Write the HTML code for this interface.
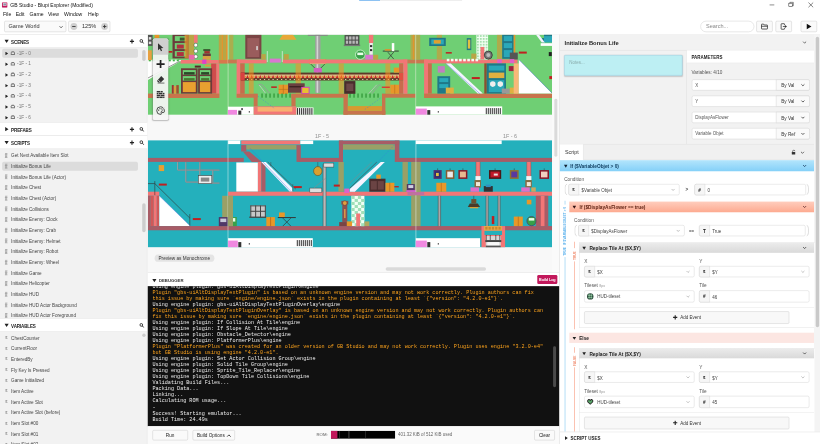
<!DOCTYPE html><html><head><meta charset="utf-8"><title>GB Studio - Blupi Explorer (Modified)</title><style>
html,body{margin:0;padding:0;background:#fff;overflow:hidden}
body{width:820px;height:444px;position:relative}
#app{position:absolute;left:0;top:0;width:1920px;height:1040px;transform:scale(0.4270833);transform-origin:0 0;font-family:"Liberation Sans",sans-serif;overflow:hidden;filter:opacity(1)}
.ab{position:absolute;box-sizing:border-box}
.t{white-space:nowrap;line-height:1.2}
.b{font-weight:bold}
.c{text-align:center}
.btn{border:1px solid #c4c4c4;border-radius:3px;background:#fafafa}
.log{font-family:"Liberation Mono",monospace;font-size:12px;line-height:14.160px;font-weight:normal}
.log div{white-space:pre;height:14.160px}
.log .w{color:#f0f0f0}
.log .o{color:#ffa41c}
.inp{border:1px solid #d0d0d0;border-radius:4px;background:#fff}
.lab{font-size:11px;color:#555;margin-top:1.500px}

</style></head><body><div id="app">
<div class="ab" style="left:0;top:0;width:1920px;height:43px;background:#fff"></div>
<svg class="ab" style="left:4px;top:5px" width="14" height="13" viewBox="0 0 15 15"><rect x="0" y="0" width="15" height="15" rx="2" fill="#c2185b"/><rect x="2.5" y="2" width="10" height="8" fill="#e8d8e0"/><rect x="4" y="3.5" width="7" height="5" fill="#8a97a8"/></svg>
<div class="ab t" style="left:24px;top:5.500px;font-size:11.800px;color:#111">GB Studio - Blupi Explorer (Modified)</div>
<div class="ab" style="left:841px;top:0;width:49px;height:2px;background:#7ab8f0"></div><div class="ab" style="left:890px;top:0;width:192px;height:2px;background:#ececec"></div>
<svg class="ab" style="left:1790px;top:0" width="130" height="23" viewBox="0 0 130 23"><path d="M12 11.5h11" stroke="#222" stroke-width="1.2"/><rect x="57" y="7.5" width="8" height="8" fill="#fff" stroke="#222" stroke-width="1.2"/><path d="M59.5 7.5v-2h8v8h-2.5" fill="none" stroke="#222" stroke-width="1.2"/><path d="M103 6l11 11M114 6l-11 11" stroke="#222" stroke-width="1.3"/></svg>
<div class="ab t" style="left:7px;top:27px;font-size:12px;color:#111">File</div>
<div class="ab t" style="left:36.7px;top:27px;font-size:12px;color:#111">Edit</div>
<div class="ab t" style="left:69.2px;top:27px;font-size:12px;color:#111">Game</div>
<div class="ab t" style="left:112.4px;top:27px;font-size:12px;color:#111">View</div>
<div class="ab t" style="left:150px;top:27px;font-size:12px;color:#111">Window</div>
<div class="ab t" style="left:206.3px;top:27px;font-size:12px;color:#111">Help</div>
<div class="ab" style="left:0;top:43px;width:1920px;height:38px;background:#fff;border-bottom:1px solid #dedede;box-sizing:border-box"></div>
<div class="ab btn" style="left:10px;top:49px;width:145px;height:26px"></div>
<div class="ab t" style="left:20px;top:54px;font-size:13px;color:#333">Game World</div>
<svg class="ab" style="left:137px;top:57px" width="12" height="12" viewBox="0 0 12 12"><path d="M2.5 4.5L6 8l3.5-3.5" fill="none" stroke="#333" stroke-width="1.8"/></svg>
<div class="ab btn" style="left:160px;top:49px;width:98px;height:26px"></div>
<div class="ab" style="left:165px;top:54px;width:16px;height:16px;border-radius:8px;background:#cfcfcf"></div><div class="ab" style="left:169px;top:61px;width:8px;height:2px;background:#333"></div>
<div class="ab t" style="left:192px;top:54px;font-size:13px;color:#333">125%</div>
<div class="ab" style="left:237px;top:54px;width:16px;height:16px;border-radius:8px;background:#cfcfcf"></div><div class="ab" style="left:241px;top:61px;width:8px;height:2px;background:#333"></div><div class="ab" style="left:244px;top:58px;width:2px;height:8px;background:#333"></div>
<div class="ab" style="left:1640px;top:49px;width:126px;height:26px;border:1px solid #c8c8c8;border-radius:13px;box-sizing:border-box;background:#fff"></div>
<div class="ab t" style="left:1653px;top:54px;font-size:13px;color:#888">Search...</div>
<div class="ab btn" style="left:1771px;top:49px;width:38px;height:26px"></div>
<svg class="ab" style="left:1781px;top:53px" width="18" height="18" viewBox="0 0 18 18"><path d="M2 4.5a1 1 0 0 1 1-1h4l1.5 2H15a1 1 0 0 1 1 1V14a1 1 0 0 1-1 1H3a1 1 0 0 1-1-1z" fill="none" stroke="#222" stroke-width="1.7"/><path d="M2 8.5h14" stroke="#222" stroke-width="1.7"/></svg>
<div class="ab btn" style="left:1816px;top:49px;width:38px;height:26px"></div>
<svg class="ab" style="left:1826px;top:53px" width="18" height="18" viewBox="0 0 18 18"><path d="M11 6V3.5a1 1 0 0 0-1-1H4a1 1 0 0 0-1 1v11a1 1 0 0 0 1 1h6a1 1 0 0 0 1-1V12" fill="none" stroke="#222" stroke-width="1.7"/><path d="M7 9h7" stroke="#222" stroke-width="1.7"/><path d="M12.5 5.5L16.5 9l-4 3.5z" fill="#222"/></svg>
<div class="ab btn" style="left:1875px;top:49px;width:38px;height:26px"></div>
<svg class="ab" style="left:1886px;top:54px" width="16" height="16" viewBox="0 0 16 16"><path d="M3 1.5v13l11-6.5z" fill="#111"/></svg>
<div class="ab" style="left:0;top:81px;width:345px;height:959px;background:#f2f2f2;border-right:1px solid #d4d4d4"></div>
<div class="ab" style="left:0;top:81px;width:345px;height:30px;background:#fff;border-bottom:1px solid #dcdcdc;border-top:1px solid #dcdcdc;box-sizing:content-box;margin-top:-1px"></div>
<svg class="ab" style="left:10px;top:91px" width="11" height="11" viewBox="0 0 10 10"><path d="M0.500 2h9L5 9z" fill="#222"/></svg>
<div class="ab t b" style="left:26px;top:91.5px;font-size:10.600px;letter-spacing:-0.3px;color:#222">SCENES</div>
<svg class="ab" style="left:302.5px;top:90.5px" width="12" height="12" viewBox="0 0 12 12"><path d="M6 1v10M1 6h10" stroke="#222" stroke-width="2.6"/></svg>
<svg class="ab" style="left:326px;top:90.5px" width="12" height="12" viewBox="0 0 12 12"><circle cx="4.8" cy="4.8" r="3.2" fill="none" stroke="#222" stroke-width="2"/><path d="M7.2 7.2L11 11" stroke="#222" stroke-width="2.2"/></svg>
<div class="ab" style="left:5px;top:114px;width:318px;height:21px;border-radius:4px;background:#dcdcdc"></div>
<svg class="ab" style="left:10.500px;top:120.5px" width="9" height="9" viewBox="0 0 10 10"><path d="M2 0.500v9l7-4.500z" fill="#222"/></svg>
<svg class="ab" style="left:24px;top:118px" width="12" height="12" viewBox="0 0 12 12"><path d="M1 10.5V5.5L3.5 2h5L11 5.5v5z" fill="#777"/><rect x="3.3" y="5" width="5.4" height="3.2" fill="#f2f2f2"/></svg>
<div class="ab t" style="left:40px;top:118px;font-size:11px;color:#777">-1F - 0</div>
<svg class="ab" style="left:10.500px;top:145.5px" width="9" height="9" viewBox="0 0 10 10"><path d="M2 0.500v9l7-4.500z" fill="#222"/></svg>
<svg class="ab" style="left:24px;top:143px" width="12" height="12" viewBox="0 0 12 12"><path d="M1 10.5V5.5L3.5 2h5L11 5.5v5z" fill="#777"/><rect x="3.3" y="5" width="5.4" height="3.2" fill="#f2f2f2"/></svg>
<div class="ab t" style="left:40px;top:143px;font-size:11px;color:#777">-1F - 1</div>
<svg class="ab" style="left:10.500px;top:170.5px" width="9" height="9" viewBox="0 0 10 10"><path d="M2 0.500v9l7-4.500z" fill="#222"/></svg>
<svg class="ab" style="left:24px;top:168px" width="12" height="12" viewBox="0 0 12 12"><path d="M1 10.5V5.5L3.5 2h5L11 5.5v5z" fill="#777"/><rect x="3.3" y="5" width="5.4" height="3.2" fill="#f2f2f2"/></svg>
<div class="ab t" style="left:40px;top:168px;font-size:11px;color:#777">-1F - 2</div>
<svg class="ab" style="left:10.500px;top:195.5px" width="9" height="9" viewBox="0 0 10 10"><path d="M2 0.500v9l7-4.500z" fill="#222"/></svg>
<svg class="ab" style="left:24px;top:193px" width="12" height="12" viewBox="0 0 12 12"><path d="M1 10.5V5.5L3.5 2h5L11 5.5v5z" fill="#777"/><rect x="3.3" y="5" width="5.4" height="3.2" fill="#f2f2f2"/></svg>
<div class="ab t" style="left:40px;top:193px;font-size:11px;color:#777">-1F - 3</div>
<svg class="ab" style="left:10.500px;top:220.5px" width="9" height="9" viewBox="0 0 10 10"><path d="M2 0.500v9l7-4.500z" fill="#222"/></svg>
<svg class="ab" style="left:24px;top:218px" width="12" height="12" viewBox="0 0 12 12"><path d="M1 10.5V5.5L3.5 2h5L11 5.5v5z" fill="#777"/><rect x="3.3" y="5" width="5.4" height="3.2" fill="#f2f2f2"/></svg>
<div class="ab t" style="left:40px;top:218px;font-size:11px;color:#777">-1F - 4</div>
<svg class="ab" style="left:10.500px;top:245.5px" width="9" height="9" viewBox="0 0 10 10"><path d="M2 0.500v9l7-4.500z" fill="#222"/></svg>
<svg class="ab" style="left:24px;top:243px" width="12" height="12" viewBox="0 0 12 12"><path d="M1 10.5V5.5L3.5 2h5L11 5.5v5z" fill="#777"/><rect x="3.3" y="5" width="5.4" height="3.2" fill="#f2f2f2"/></svg>
<div class="ab t" style="left:40px;top:243px;font-size:11px;color:#777">-1F - 5</div>
<svg class="ab" style="left:10.500px;top:270.5px" width="9" height="9" viewBox="0 0 10 10"><path d="M2 0.500v9l7-4.500z" fill="#222"/></svg>
<svg class="ab" style="left:24px;top:268px" width="12" height="12" viewBox="0 0 12 12"><path d="M1 10.5V5.5L3.5 2h5L11 5.5v5z" fill="#777"/><rect x="3.3" y="5" width="5.4" height="3.2" fill="#f2f2f2"/></svg>
<div class="ab t" style="left:40px;top:268px;font-size:11px;color:#777">-1F - 6</div>
<div class="ab" style="left:333px;top:117px;width:8px;height:26px;border-radius:4px;background:#cdcdcd"></div>
<div class="ab" style="left:0;top:287px;width:345px;height:30px;background:#fff;border-bottom:1px solid #dcdcdc;border-top:1px solid #dcdcdc;box-sizing:content-box;margin-top:-1px"></div>
<svg class="ab" style="left:10px;top:297px" width="11" height="11" viewBox="0 0 10 10"><path d="M2 0.500v9l7-4.500z" fill="#222"/></svg>
<div class="ab t b" style="left:26px;top:297.5px;font-size:10.600px;letter-spacing:-0.3px;color:#222">PREFABS</div>
<svg class="ab" style="left:302.5px;top:296.5px" width="12" height="12" viewBox="0 0 12 12"><path d="M6 1v10M1 6h10" stroke="#222" stroke-width="2.6"/></svg>
<svg class="ab" style="left:326px;top:296.5px" width="12" height="12" viewBox="0 0 12 12"><circle cx="4.8" cy="4.8" r="3.2" fill="none" stroke="#222" stroke-width="2"/><path d="M7.2 7.2L11 11" stroke="#222" stroke-width="2.2"/></svg>
<div class="ab" style="left:0;top:318px;width:345px;height:30px;background:#fff;border-bottom:1px solid #dcdcdc;border-top:1px solid #dcdcdc;box-sizing:content-box;margin-top:-1px"></div>
<svg class="ab" style="left:10px;top:328px" width="11" height="11" viewBox="0 0 10 10"><path d="M0.500 2h9L5 9z" fill="#222"/></svg>
<div class="ab t b" style="left:26px;top:328.5px;font-size:10.600px;letter-spacing:-0.3px;color:#222">SCRIPTS</div>
<svg class="ab" style="left:302.5px;top:327.5px" width="12" height="12" viewBox="0 0 12 12"><path d="M6 1v10M1 6h10" stroke="#222" stroke-width="2.6"/></svg>
<svg class="ab" style="left:326px;top:327.5px" width="12" height="12" viewBox="0 0 12 12"><circle cx="4.8" cy="4.8" r="3.2" fill="none" stroke="#222" stroke-width="2"/><path d="M7.2 7.2L11 11" stroke="#222" stroke-width="2.2"/></svg>
<svg class="ab" style="left:9px;top:357.5px" width="11" height="12" viewBox="0 0 11 12"><path d="M3 1h5.5M5 1v10M2.5 4.5h6M3 8h5M2.5 11h6" stroke="#888" stroke-width="1.400" fill="none"/></svg>
<div class="ab t" style="left:26px;top:358.0px;font-size:10.800px;color:#444">Get Next Available Item Slot</div>
<div class="ab" style="left:5px;top:378.5px;width:318px;height:21px;border-radius:4px;background:#dcdcdc"></div>
<svg class="ab" style="left:9px;top:382.5px" width="11" height="12" viewBox="0 0 11 12"><path d="M3 1h5.5M5 1v10M2.5 4.5h6M3 8h5M2.5 11h6" stroke="#888" stroke-width="1.400" fill="none"/></svg>
<div class="ab t" style="left:26px;top:383.0px;font-size:10.800px;color:#444">Initialize Bonus Life</div>
<svg class="ab" style="left:9px;top:407.5px" width="11" height="12" viewBox="0 0 11 12"><path d="M3 1h5.5M5 1v10M2.5 4.5h6M3 8h5M2.5 11h6" stroke="#888" stroke-width="1.400" fill="none"/></svg>
<div class="ab t" style="left:26px;top:408.0px;font-size:10.800px;color:#444">Initialize Bonus Life (Actor)</div>
<svg class="ab" style="left:9px;top:432.5px" width="11" height="12" viewBox="0 0 11 12"><path d="M3 1h5.5M5 1v10M2.5 4.5h6M3 8h5M2.5 11h6" stroke="#888" stroke-width="1.400" fill="none"/></svg>
<div class="ab t" style="left:26px;top:433.0px;font-size:10.800px;color:#444">Initialize Chest</div>
<svg class="ab" style="left:9px;top:457.5px" width="11" height="12" viewBox="0 0 11 12"><path d="M3 1h5.5M5 1v10M2.5 4.5h6M3 8h5M2.5 11h6" stroke="#888" stroke-width="1.400" fill="none"/></svg>
<div class="ab t" style="left:26px;top:458.0px;font-size:10.800px;color:#444">Initialize Chest (Actor)</div>
<svg class="ab" style="left:9px;top:482.5px" width="11" height="12" viewBox="0 0 11 12"><path d="M3 1h5.5M5 1v10M2.5 4.5h6M3 8h5M2.5 11h6" stroke="#888" stroke-width="1.400" fill="none"/></svg>
<div class="ab t" style="left:26px;top:483.0px;font-size:10.800px;color:#444">Initialize Collisions</div>
<svg class="ab" style="left:9px;top:507.5px" width="11" height="12" viewBox="0 0 11 12"><path d="M3 1h5.5M5 1v10M2.5 4.5h6M3 8h5M2.5 11h6" stroke="#888" stroke-width="1.400" fill="none"/></svg>
<div class="ab t" style="left:26px;top:508.0px;font-size:10.800px;color:#444">Initialize Enemy: Clock</div>
<svg class="ab" style="left:9px;top:532.5px" width="11" height="12" viewBox="0 0 11 12"><path d="M3 1h5.5M5 1v10M2.5 4.5h6M3 8h5M2.5 11h6" stroke="#888" stroke-width="1.400" fill="none"/></svg>
<div class="ab t" style="left:26px;top:533.0px;font-size:10.800px;color:#444">Initialize Enemy: Crab</div>
<svg class="ab" style="left:9px;top:557.5px" width="11" height="12" viewBox="0 0 11 12"><path d="M3 1h5.5M5 1v10M2.5 4.5h6M3 8h5M2.5 11h6" stroke="#888" stroke-width="1.400" fill="none"/></svg>
<div class="ab t" style="left:26px;top:558.0px;font-size:10.800px;color:#444">Initialize Enemy: Helmet</div>
<svg class="ab" style="left:9px;top:582.5px" width="11" height="12" viewBox="0 0 11 12"><path d="M3 1h5.5M5 1v10M2.5 4.5h6M3 8h5M2.5 11h6" stroke="#888" stroke-width="1.400" fill="none"/></svg>
<div class="ab t" style="left:26px;top:583.0px;font-size:10.800px;color:#444">Initialize Enemy: Robot</div>
<svg class="ab" style="left:9px;top:607.5px" width="11" height="12" viewBox="0 0 11 12"><path d="M3 1h5.5M5 1v10M2.5 4.5h6M3 8h5M2.5 11h6" stroke="#888" stroke-width="1.400" fill="none"/></svg>
<div class="ab t" style="left:26px;top:608.0px;font-size:10.800px;color:#444">Initialize Enemy: Wheel</div>
<svg class="ab" style="left:9px;top:632.5px" width="11" height="12" viewBox="0 0 11 12"><path d="M3 1h5.5M5 1v10M2.5 4.5h6M3 8h5M2.5 11h6" stroke="#888" stroke-width="1.400" fill="none"/></svg>
<div class="ab t" style="left:26px;top:633.0px;font-size:10.800px;color:#444">Initialize Game</div>
<svg class="ab" style="left:9px;top:657.5px" width="11" height="12" viewBox="0 0 11 12"><path d="M3 1h5.5M5 1v10M2.5 4.5h6M3 8h5M2.5 11h6" stroke="#888" stroke-width="1.400" fill="none"/></svg>
<div class="ab t" style="left:26px;top:658.0px;font-size:10.800px;color:#444">Initialize Helicopter</div>
<svg class="ab" style="left:9px;top:682.5px" width="11" height="12" viewBox="0 0 11 12"><path d="M3 1h5.5M5 1v10M2.5 4.5h6M3 8h5M2.5 11h6" stroke="#888" stroke-width="1.400" fill="none"/></svg>
<div class="ab t" style="left:26px;top:683.0px;font-size:10.800px;color:#444">Initialize HUD</div>
<svg class="ab" style="left:9px;top:707.5px" width="11" height="12" viewBox="0 0 11 12"><path d="M3 1h5.5M5 1v10M2.5 4.5h6M3 8h5M2.5 11h6" stroke="#888" stroke-width="1.400" fill="none"/></svg>
<div class="ab t" style="left:26px;top:708.0px;font-size:10.800px;color:#444">Initialize HUD Actor Background</div>
<svg class="ab" style="left:9px;top:732.5px" width="11" height="12" viewBox="0 0 11 12"><path d="M3 1h5.5M5 1v10M2.5 4.5h6M3 8h5M2.5 11h6" stroke="#888" stroke-width="1.400" fill="none"/></svg>
<div class="ab t" style="left:26px;top:733.0px;font-size:10.800px;color:#444">Initialize HUD Actor Foreground</div>
<div class="ab" style="left:333px;top:476px;width:8px;height:68px;border-radius:4px;background:#cdcdcd"></div>
<div class="ab" style="left:0;top:746px;width:345px;height:30px;background:#fff;border-bottom:1px solid #dcdcdc;border-top:1px solid #dcdcdc;box-sizing:content-box;margin-top:-1px"></div>
<svg class="ab" style="left:10px;top:756px" width="11" height="11" viewBox="0 0 10 10"><path d="M0.500 2h9L5 9z" fill="#222"/></svg>
<div class="ab t b" style="left:26px;top:756.5px;font-size:10.600px;letter-spacing:-0.3px;color:#222">VARIABLES</div>
<svg class="ab" style="left:326px;top:755.5px" width="12" height="12" viewBox="0 0 12 12"><circle cx="4.8" cy="4.8" r="3.2" fill="none" stroke="#222" stroke-width="2"/><path d="M7.2 7.2L11 11" stroke="#222" stroke-width="2.2"/></svg>
<div class="ab t b" style="left:12px;top:785.0px;font-size:9.500px;color:#909090">$</div>
<div class="ab t" style="left:26px;top:785.0px;font-size:10.800px;color:#444">ChestCounter</div>
<div class="ab t b" style="left:12px;top:810.0px;font-size:9.500px;color:#909090">$</div>
<div class="ab t" style="left:26px;top:810.0px;font-size:10.800px;color:#444">CurrentFloor</div>
<div class="ab t b" style="left:12px;top:835.0px;font-size:9.500px;color:#909090">$</div>
<div class="ab t" style="left:26px;top:835.0px;font-size:10.800px;color:#444">EnteredBy</div>
<div class="ab t b" style="left:12px;top:860.0px;font-size:9.500px;color:#909090">$</div>
<div class="ab t" style="left:26px;top:860.0px;font-size:10.800px;color:#444">Fly Key Is Pressed</div>
<div class="ab t b" style="left:12px;top:885.0px;font-size:9.500px;color:#909090">$</div>
<div class="ab t" style="left:26px;top:885.0px;font-size:10.800px;color:#444">Game Initialized</div>
<div class="ab t b" style="left:12px;top:910.0px;font-size:9.500px;color:#909090">$</div>
<div class="ab t" style="left:26px;top:910.0px;font-size:10.800px;color:#444">Item Active</div>
<div class="ab t b" style="left:12px;top:935.0px;font-size:9.500px;color:#909090">$</div>
<div class="ab t" style="left:26px;top:935.0px;font-size:10.800px;color:#444">Item Active Slot</div>
<div class="ab t b" style="left:12px;top:960.0px;font-size:9.500px;color:#909090">$</div>
<div class="ab t" style="left:26px;top:960.0px;font-size:10.800px;color:#444">Item Active Slot (before)</div>
<div class="ab t b" style="left:12px;top:985.0px;font-size:9.500px;color:#909090">$</div>
<div class="ab t" style="left:26px;top:985.0px;font-size:10.800px;color:#444">Item Slot #00</div>
<div class="ab t b" style="left:12px;top:1010.0px;font-size:9.500px;color:#909090">$</div>
<div class="ab t" style="left:26px;top:1010.0px;font-size:10.800px;color:#444">Item Slot #01</div>
<div class="ab t b" style="left:12px;top:1035.0px;font-size:9.500px;color:#909090">$</div>
<div class="ab t" style="left:26px;top:1035.0px;font-size:10.800px;color:#444">Item Slot #02</div>
<div class="ab t b" style="left:12px;top:1060.0px;font-size:9.500px;color:#909090">$</div>
<div class="ab t" style="left:26px;top:1060.0px;font-size:10.800px;color:#444">Item Slot #03</div>
<div class="ab" style="left:333px;top:781px;width:8px;height:8px;border-radius:4px;background:#cdcdcd"></div>
<div class="ab" style="left:346px;top:81px;width:964px;height:557px;background:#f8f8f8;overflow:hidden">
<svg class="ab" style="left:0;top:0" width="947" height="557" viewBox="148 34.5 404.4 237.9"><rect x="148.00" y="34.50" width="404.30" height="80.10" fill="#6fcf74"/><rect x="172.70" y="34.50" width="16.30" height="23.80" fill="#6b3b3b"/><rect x="175.00" y="36.00" width="11.50" height="5.00" fill="#6fcf74"/><rect x="175.00" y="43.00" width="11.50" height="6.00" fill="#6fcf74"/><rect x="175.00" y="51.00" width="11.50" height="5.50" fill="#6fcf74"/><rect x="177.00" y="44.50" width="7.00" height="4.00" fill="#b03040"/><rect x="177.00" y="52.00" width="7.00" height="4.00" fill="#b03040"/><rect x="180.00" y="37.50" width="5.00" height="3.00" fill="#3a5a30"/><rect x="184.80" y="34.50" width="4.20" height="23.80" fill="#e2942f" opacity="0.75"/><rect x="189.00" y="34.50" width="5.20" height="20.50" fill="#b9a545"/><rect x="194.20" y="34.50" width="3.60" height="8.30" fill="#f27676"/><circle cx="196" cy="45" r="1.9" fill="#fff" stroke="#333" stroke-width="0.4"/><circle cx="196" cy="51" r="1.9" fill="#fff" stroke="#333" stroke-width="0.4"/><circle cx="196" cy="56.5" r="1.9" fill="#fff" stroke="#333" stroke-width="0.4"/><rect x="189.00" y="54.70" width="5.70" height="4.90" fill="#e868a8"/><rect x="203.50" y="49.00" width="7.00" height="2.00" fill="#3a5a30"/><rect x="204.50" y="51.00" width="5.50" height="2.50" fill="#a03030"/><rect x="203.00" y="53.50" width="8.00" height="2.50" fill="#6b3b3b"/><rect x="203.00" y="56.00" width="8.00" height="3.60" fill="#d8a040"/><rect x="180.70" y="59.90" width="38.30" height="3.60" fill="#f27676"/><rect x="219.00" y="59.90" width="9.30" height="3.60" fill="#d8784c"/><rect x="202.40" y="59.40" width="4.20" height="4.40" fill="#e040c8"/><rect x="219.00" y="34.50" width="2.50" height="25.40" fill="#b9a545"/><rect x="221.50" y="34.50" width="1.80" height="25.40" fill="#e2942f"/><rect x="223.30" y="34.50" width="2.70" height="25.40" fill="#b9a545"/><rect x="226.00" y="34.50" width="2.00" height="25.40" fill="#e2942f"/><rect x="216.40" y="63.50" width="3.10" height="34.00" fill="#f27676"/><rect x="211.30" y="63.50" width="5.10" height="30.00" fill="#d04c4c"/><rect x="148.00" y="93.50" width="71.50" height="4.40" fill="#c8744c"/><rect x="181.20" y="68.20" width="16.60" height="25.30" fill="#6b3b3b"/><rect x="183.00" y="70.00" width="13.00" height="4.50" fill="#6fcf74"/><rect x="183.00" y="76.00" width="13.00" height="4.50" fill="#6fcf74"/><rect x="183.00" y="82.00" width="13.00" height="10.00" fill="#e8a030"/><rect x="184.20" y="72.00" width="10.60" height="2.50" fill="#2a4a28"/><rect x="184.20" y="78.00" width="10.60" height="2.50" fill="#4a7a30"/><rect x="198.30" y="68.20" width="14.00" height="25.30" fill="#6b3b3b"/><rect x="200.10" y="70.00" width="10.40" height="4.50" fill="#6fcf74"/><rect x="200.10" y="76.00" width="10.40" height="4.50" fill="#6fcf74"/><rect x="200.10" y="82.00" width="10.40" height="10.00" fill="#e8a030"/><rect x="201.30" y="72.00" width="8.00" height="2.50" fill="#2a4a28"/><rect x="201.30" y="78.00" width="8.00" height="2.50" fill="#4a7a30"/><rect x="205.00" y="64.50" width="6.00" height="2.00" fill="#d8a040"/><rect x="195.00" y="65.50" width="6.00" height="2.00" fill="#5a2828"/><rect x="172.00" y="85.00" width="2.00" height="8.50" fill="#a03030"/><rect x="174.00" y="86.00" width="2.50" height="7.50" fill="#d8a040"/><rect x="176.50" y="85.00" width="2.50" height="8.50" fill="#a05030"/><polygon points="148.00,60.00 181.00,60.00 181.00,61.00 148.00,80.00" fill="#ffffff"/><line x1="148.00" y1="78.00" x2="180.00" y2="61.00" stroke="#333" stroke-width="0.5"/><rect x="148.00" y="59.50" width="30.00" height="1.70" fill="#e8ffe8"/><rect x="149.00" y="59.50" width="2.00" height="1.70" fill="#40b048"/><rect x="153.00" y="59.50" width="2.00" height="1.70" fill="#40b048"/><rect x="157.00" y="59.50" width="2.00" height="1.70" fill="#40b048"/><rect x="161.00" y="59.50" width="2.00" height="1.70" fill="#40b048"/><rect x="165.00" y="59.50" width="2.00" height="1.70" fill="#40b048"/><rect x="169.00" y="59.50" width="2.00" height="1.70" fill="#40b048"/><rect x="173.00" y="59.50" width="2.00" height="1.70" fill="#40b048"/><rect x="177.00" y="59.50" width="2.00" height="1.70" fill="#40b048"/><rect x="148.00" y="50.20" width="4.00" height="9.80" fill="#e8a040"/><rect x="148.00" y="34.50" width="4.80" height="11.30" fill="#555"/><rect x="149.00" y="37.00" width="2.50" height="2.50" fill="#ddd"/><rect x="149.00" y="41.50" width="2.50" height="2.50" fill="#ddd"/><rect x="154.80" y="34.50" width="4.70" height="3.50" fill="#e8962a"/><rect x="168.60" y="50.90" width="3.90" height="1.70" fill="#c02020"/><line x1="228.30" y1="34.50" x2="228.30" y2="114.60" stroke="#f0f0e0" stroke-width="0.5"/><rect x="229.60" y="34.50" width="3.90" height="24.90" fill="#b9a545" opacity="0.8"/><rect x="245.50" y="34.50" width="16.10" height="24.20" fill="#7a4444"/><rect x="247.50" y="38.00" width="12.00" height="19.00" fill="#9a5c5c"/><rect x="256.50" y="46.00" width="1.50" height="4.00" fill="#ddd"/><polygon points="283.00,34.50 293.00,34.50 296.70,39.70 279.60,39.70" fill="#e8a838"/><rect x="315.40" y="34.50" width="5.30" height="58.20" fill="#a0a0a0"/><rect x="316.80" y="34.50" width="1.60" height="58.20" fill="#d4d4d4"/><rect x="308.00" y="34.50" width="20.00" height="1.30" fill="#888"/><rect x="309.80" y="59.50" width="16.20" height="4.20" fill="#e8e8e8" stroke="#d8902c" stroke-width="0.6"/><line x1="311.00" y1="64.00" x2="315.00" y2="68.00" stroke="#333" stroke-width="0.7"/><line x1="325.00" y1="64.00" x2="321.00" y2="68.00" stroke="#333" stroke-width="0.7"/><rect x="314.00" y="67.90" width="8.00" height="4.60" fill="#d060c0"/><rect x="236.80" y="59.40" width="30.00" height="3.90" fill="#f27676"/><rect x="282.90" y="59.40" width="124.70" height="3.90" fill="#f27676"/><rect x="270.00" y="58.50" width="11.00" height="4.00" fill="#d878d0"/><line x1="267.50" y1="51.00" x2="267.50" y2="62.00" stroke="#eee" stroke-width="0.7"/><line x1="282.50" y1="51.00" x2="282.50" y2="62.00" stroke="#eee" stroke-width="0.7"/><rect x="261.60" y="54.00" width="4.40" height="5.40" fill="#b9a545"/><rect x="284.00" y="54.00" width="5.00" height="5.40" fill="#b9a545"/><rect x="236.80" y="59.40" width="3.80" height="38.10" fill="#f27676"/><rect x="240.40" y="63.30" width="4.50" height="30.40" fill="#c86c4c"/><rect x="241.20" y="72.50" width="162.30" height="7.90" fill="#5e3828"/><rect x="241.20" y="74.40" width="158.10" height="3.60" fill="#dcbc84"/><polygon points="242.00,78.00 243.40,74.80 244.80,78.00" fill="#c82828"/><rect x="245.00" y="76.00" width="1.10" height="1.60" fill="#e08830"/><rect x="242.80" y="78.90" width="1.20" height="1.00" fill="#e8d8b0"/><polygon points="246.27,78.00 247.67,74.80 249.07,78.00" fill="#c82828"/><rect x="249.27" y="76.00" width="1.10" height="1.60" fill="#e08830"/><rect x="247.07" y="78.90" width="1.20" height="1.00" fill="#e8d8b0"/><polygon points="250.54,78.00 251.94,74.80 253.34,78.00" fill="#c82828"/><rect x="253.54" y="76.00" width="1.10" height="1.60" fill="#e08830"/><rect x="251.34" y="78.90" width="1.20" height="1.00" fill="#e8d8b0"/><polygon points="254.81,78.00 256.21,74.80 257.61,78.00" fill="#c82828"/><rect x="257.81" y="76.00" width="1.10" height="1.60" fill="#e08830"/><rect x="255.61" y="78.90" width="1.20" height="1.00" fill="#e8d8b0"/><polygon points="259.08,78.00 260.48,74.80 261.88,78.00" fill="#c82828"/><rect x="262.08" y="76.00" width="1.10" height="1.60" fill="#e08830"/><rect x="259.88" y="78.90" width="1.20" height="1.00" fill="#e8d8b0"/><polygon points="263.35,78.00 264.75,74.80 266.15,78.00" fill="#c82828"/><rect x="266.35" y="76.00" width="1.10" height="1.60" fill="#e08830"/><rect x="264.15" y="78.90" width="1.20" height="1.00" fill="#e8d8b0"/><polygon points="267.62,78.00 269.02,74.80 270.42,78.00" fill="#c82828"/><rect x="270.62" y="76.00" width="1.10" height="1.60" fill="#e08830"/><rect x="268.42" y="78.90" width="1.20" height="1.00" fill="#e8d8b0"/><polygon points="271.89,78.00 273.29,74.80 274.69,78.00" fill="#c82828"/><rect x="274.89" y="76.00" width="1.10" height="1.60" fill="#e08830"/><rect x="272.69" y="78.90" width="1.20" height="1.00" fill="#e8d8b0"/><polygon points="276.16,78.00 277.56,74.80 278.96,78.00" fill="#c82828"/><rect x="279.16" y="76.00" width="1.10" height="1.60" fill="#e08830"/><rect x="276.96" y="78.90" width="1.20" height="1.00" fill="#e8d8b0"/><polygon points="280.43,78.00 281.83,74.80 283.23,78.00" fill="#c82828"/><rect x="283.43" y="76.00" width="1.10" height="1.60" fill="#e08830"/><rect x="281.23" y="78.90" width="1.20" height="1.00" fill="#e8d8b0"/><polygon points="284.70,78.00 286.10,74.80 287.50,78.00" fill="#c82828"/><rect x="287.70" y="76.00" width="1.10" height="1.60" fill="#e08830"/><rect x="285.50" y="78.90" width="1.20" height="1.00" fill="#e8d8b0"/><polygon points="288.97,78.00 290.37,74.80 291.77,78.00" fill="#c82828"/><rect x="291.97" y="76.00" width="1.10" height="1.60" fill="#e08830"/><rect x="289.77" y="78.90" width="1.20" height="1.00" fill="#e8d8b0"/><polygon points="293.24,78.00 294.64,74.80 296.04,78.00" fill="#c82828"/><rect x="296.24" y="76.00" width="1.10" height="1.60" fill="#e08830"/><rect x="294.04" y="78.90" width="1.20" height="1.00" fill="#e8d8b0"/><polygon points="297.51,78.00 298.91,74.80 300.31,78.00" fill="#c82828"/><rect x="300.51" y="76.00" width="1.10" height="1.60" fill="#e08830"/><rect x="298.31" y="78.90" width="1.20" height="1.00" fill="#e8d8b0"/><polygon points="301.78,78.00 303.18,74.80 304.58,78.00" fill="#c82828"/><rect x="304.78" y="76.00" width="1.10" height="1.60" fill="#e08830"/><rect x="302.58" y="78.90" width="1.20" height="1.00" fill="#e8d8b0"/><polygon points="306.05,78.00 307.45,74.80 308.85,78.00" fill="#c82828"/><rect x="309.05" y="76.00" width="1.10" height="1.60" fill="#e08830"/><rect x="306.85" y="78.90" width="1.20" height="1.00" fill="#e8d8b0"/><polygon points="310.32,78.00 311.72,74.80 313.12,78.00" fill="#c82828"/><rect x="313.32" y="76.00" width="1.10" height="1.60" fill="#e08830"/><rect x="311.12" y="78.90" width="1.20" height="1.00" fill="#e8d8b0"/><polygon points="314.59,78.00 315.99,74.80 317.39,78.00" fill="#c82828"/><rect x="317.59" y="76.00" width="1.10" height="1.60" fill="#e08830"/><rect x="315.39" y="78.90" width="1.20" height="1.00" fill="#e8d8b0"/><polygon points="318.86,78.00 320.26,74.80 321.66,78.00" fill="#c82828"/><rect x="321.86" y="76.00" width="1.10" height="1.60" fill="#e08830"/><rect x="319.66" y="78.90" width="1.20" height="1.00" fill="#e8d8b0"/><polygon points="323.13,78.00 324.53,74.80 325.93,78.00" fill="#c82828"/><rect x="326.13" y="76.00" width="1.10" height="1.60" fill="#e08830"/><rect x="323.93" y="78.90" width="1.20" height="1.00" fill="#e8d8b0"/><polygon points="327.40,78.00 328.80,74.80 330.20,78.00" fill="#c82828"/><rect x="330.40" y="76.00" width="1.10" height="1.60" fill="#e08830"/><rect x="328.20" y="78.90" width="1.20" height="1.00" fill="#e8d8b0"/><polygon points="331.67,78.00 333.07,74.80 334.47,78.00" fill="#c82828"/><rect x="334.67" y="76.00" width="1.10" height="1.60" fill="#e08830"/><rect x="332.47" y="78.90" width="1.20" height="1.00" fill="#e8d8b0"/><polygon points="335.94,78.00 337.34,74.80 338.74,78.00" fill="#c82828"/><rect x="338.94" y="76.00" width="1.10" height="1.60" fill="#e08830"/><rect x="336.74" y="78.90" width="1.20" height="1.00" fill="#e8d8b0"/><polygon points="340.21,78.00 341.61,74.80 343.01,78.00" fill="#c82828"/><rect x="343.21" y="76.00" width="1.10" height="1.60" fill="#e08830"/><rect x="341.01" y="78.90" width="1.20" height="1.00" fill="#e8d8b0"/><polygon points="344.48,78.00 345.88,74.80 347.28,78.00" fill="#c82828"/><rect x="347.48" y="76.00" width="1.10" height="1.60" fill="#e08830"/><rect x="345.28" y="78.90" width="1.20" height="1.00" fill="#e8d8b0"/><polygon points="348.75,78.00 350.15,74.80 351.55,78.00" fill="#c82828"/><rect x="351.75" y="76.00" width="1.10" height="1.60" fill="#e08830"/><rect x="349.55" y="78.90" width="1.20" height="1.00" fill="#e8d8b0"/><polygon points="353.02,78.00 354.42,74.80 355.82,78.00" fill="#c82828"/><rect x="356.02" y="76.00" width="1.10" height="1.60" fill="#e08830"/><rect x="353.82" y="78.90" width="1.20" height="1.00" fill="#e8d8b0"/><polygon points="357.29,78.00 358.69,74.80 360.09,78.00" fill="#c82828"/><rect x="360.29" y="76.00" width="1.10" height="1.60" fill="#e08830"/><rect x="358.09" y="78.90" width="1.20" height="1.00" fill="#e8d8b0"/><polygon points="361.56,78.00 362.96,74.80 364.36,78.00" fill="#c82828"/><rect x="364.56" y="76.00" width="1.10" height="1.60" fill="#e08830"/><rect x="362.36" y="78.90" width="1.20" height="1.00" fill="#e8d8b0"/><polygon points="365.83,78.00 367.23,74.80 368.63,78.00" fill="#c82828"/><rect x="368.83" y="76.00" width="1.10" height="1.60" fill="#e08830"/><rect x="366.63" y="78.90" width="1.20" height="1.00" fill="#e8d8b0"/><polygon points="370.10,78.00 371.50,74.80 372.90,78.00" fill="#c82828"/><rect x="373.10" y="76.00" width="1.10" height="1.60" fill="#e08830"/><rect x="370.90" y="78.90" width="1.20" height="1.00" fill="#e8d8b0"/><polygon points="374.37,78.00 375.77,74.80 377.17,78.00" fill="#c82828"/><rect x="377.37" y="76.00" width="1.10" height="1.60" fill="#e08830"/><rect x="375.17" y="78.90" width="1.20" height="1.00" fill="#e8d8b0"/><polygon points="378.64,78.00 380.04,74.80 381.44,78.00" fill="#c82828"/><rect x="381.64" y="76.00" width="1.10" height="1.60" fill="#e08830"/><rect x="379.44" y="78.90" width="1.20" height="1.00" fill="#e8d8b0"/><polygon points="382.91,78.00 384.31,74.80 385.71,78.00" fill="#c82828"/><rect x="385.91" y="76.00" width="1.10" height="1.60" fill="#e08830"/><rect x="383.71" y="78.90" width="1.20" height="1.00" fill="#e8d8b0"/><polygon points="387.18,78.00 388.58,74.80 389.98,78.00" fill="#c82828"/><rect x="390.18" y="76.00" width="1.10" height="1.60" fill="#e08830"/><rect x="387.98" y="78.90" width="1.20" height="1.00" fill="#e8d8b0"/><polygon points="391.45,78.00 392.85,74.80 394.25,78.00" fill="#c82828"/><rect x="394.45" y="76.00" width="1.10" height="1.60" fill="#e08830"/><rect x="392.25" y="78.90" width="1.20" height="1.00" fill="#e8d8b0"/><polygon points="395.72,78.00 397.12,74.80 398.52,78.00" fill="#c82828"/><rect x="398.72" y="76.00" width="1.10" height="1.60" fill="#e08830"/><rect x="396.52" y="78.90" width="1.20" height="1.00" fill="#e8d8b0"/><rect x="399.30" y="72.50" width="4.20" height="7.90" fill="#e05040"/><rect x="240.70" y="72.50" width="4.20" height="7.90" fill="#d84040"/><rect x="249.00" y="63.30" width="4.90" height="30.40" fill="#ff8a20" opacity="0.55"/><rect x="295.80" y="63.30" width="5.30" height="30.40" fill="#ff8a20" opacity="0.55"/><rect x="338.90" y="63.30" width="5.10" height="30.40" fill="#ff8a20" opacity="0.55"/><rect x="385.60" y="63.30" width="4.90" height="30.40" fill="#ff8a20" opacity="0.55"/><line x1="258.50" y1="84.50" x2="262.00" y2="84.50" stroke="#999" stroke-width="0.8"/><line x1="262.00" y1="84.50" x2="270.00" y2="93.50" stroke="#999" stroke-width="0.9"/><line x1="259.50" y1="85.00" x2="266.00" y2="93.50" stroke="#ccc" stroke-width="0.8"/><rect x="271.40" y="86.30" width="5.60" height="1.50" fill="#c02020"/><rect x="278.80" y="84.60" width="9.40" height="9.40" fill="#e8962a"/><line x1="283.50" y1="84.60" x2="283.50" y2="94.00" stroke="#b06818" stroke-width="0.6"/><line x1="278.80" y1="89.30" x2="288.20" y2="89.30" stroke="#b06818" stroke-width="0.5"/><rect x="288.20" y="83.20" width="16.70" height="9.40" fill="#6a4040"/><rect x="289.50" y="86.00" width="14.00" height="1.30" fill="#3a2020"/><rect x="301.40" y="86.70" width="8.40" height="7.30" fill="#d040c0"/><rect x="302.40" y="87.70" width="6.40" height="5.30" fill="#e8c030"/><rect x="236.90" y="93.70" width="20.90" height="3.90" fill="#c8744c"/><rect x="228.10" y="106.60" width="25.80" height="8.00" fill="#ffffff"/><rect x="228.10" y="109.80" width="9.10" height="4.80" fill="#f088e0"/><rect x="238.50" y="110.50" width="3.00" height="4.10" fill="#333"/><rect x="249.00" y="111.00" width="1.00" height="1.50" fill="#333"/><rect x="241.50" y="108.00" width="1.50" height="2.00" fill="#333"/><rect x="296.50" y="107.40" width="17.20" height="7.20" fill="#ffffff"/><rect x="297.20" y="108.00" width="1.10" height="6.60" fill="#333"/><rect x="299.25" y="108.00" width="1.10" height="6.60" fill="#333"/><rect x="301.30" y="108.00" width="1.10" height="6.60" fill="#333"/><rect x="303.35" y="108.00" width="1.10" height="6.60" fill="#333"/><rect x="305.40" y="108.00" width="1.10" height="6.60" fill="#333"/><rect x="307.45" y="108.00" width="1.10" height="6.60" fill="#333"/><rect x="309.50" y="108.00" width="1.10" height="6.60" fill="#333"/><rect x="311.55" y="108.00" width="1.10" height="6.60" fill="#333"/><rect x="253.90" y="93.70" width="3.90" height="12.60" fill="#c8744c"/><rect x="291.60" y="93.70" width="4.20" height="12.60" fill="#c8744c"/><rect x="253.90" y="106.30" width="42.60" height="8.30" fill="#f27676"/><rect x="257.80" y="107.00" width="34.70" height="4.50" fill="#f8b070"/><line x1="258.00" y1="96.00" x2="275.00" y2="108.50" stroke="#4080e0" stroke-width="0.45" stroke-dasharray="1.6 1.4"/><rect x="261.50" y="93.40" width="1.50" height="4.20" fill="#3aa040"/><rect x="265.50" y="93.40" width="1.50" height="4.20" fill="#3aa040"/><rect x="269.50" y="93.40" width="1.50" height="4.20" fill="#3aa040"/><rect x="273.50" y="93.40" width="1.50" height="4.20" fill="#3aa040"/><rect x="277.50" y="93.40" width="1.50" height="4.20" fill="#3aa040"/><rect x="281.50" y="93.40" width="1.50" height="4.20" fill="#3aa040"/><rect x="285.50" y="93.40" width="1.50" height="4.20" fill="#3aa040"/><rect x="289.50" y="93.40" width="1.50" height="4.20" fill="#3aa040"/><rect x="291.60" y="93.70" width="56.40" height="3.90" fill="#c8744c"/><rect x="343.70" y="93.70" width="4.30" height="20.90" fill="#c8744c"/><rect x="382.20" y="93.70" width="3.40" height="20.90" fill="#c8744c"/><rect x="343.70" y="110.70" width="41.90" height="3.90" fill="#c8744c"/><rect x="348.00" y="106.00" width="34.20" height="4.70" fill="#d89a30"/><rect x="382.20" y="93.70" width="33.50" height="3.90" fill="#c8744c"/><line x1="380.70" y1="97.90" x2="365.00" y2="109.40" stroke="#4080e0" stroke-width="0.45" stroke-dasharray="1.6 1.4"/><rect x="349.50" y="93.40" width="1.50" height="4.20" fill="#3aa040"/><rect x="353.50" y="93.40" width="1.50" height="4.20" fill="#3aa040"/><rect x="357.50" y="93.40" width="1.50" height="4.20" fill="#3aa040"/><rect x="361.50" y="93.40" width="1.50" height="4.20" fill="#3aa040"/><rect x="365.50" y="93.40" width="1.50" height="4.20" fill="#3aa040"/><rect x="369.50" y="93.40" width="1.50" height="4.20" fill="#3aa040"/><rect x="373.50" y="93.40" width="1.50" height="4.20" fill="#3aa040"/><rect x="377.50" y="93.40" width="1.50" height="4.20" fill="#3aa040"/><line x1="369.00" y1="93.50" x2="377.00" y2="84.60" stroke="#bbb" stroke-width="0.9"/><line x1="372.00" y1="93.50" x2="379.50" y2="84.60" stroke="#999" stroke-width="0.8"/><line x1="379.50" y1="84.60" x2="381.50" y2="86.00" stroke="#999" stroke-width="0.8"/><rect x="382.00" y="86.50" width="8.00" height="1.30" fill="#e03030"/><rect x="344.40" y="81.00" width="11.20" height="12.70" fill="#4a2c2c"/><rect x="346.50" y="83.50" width="7.00" height="7.50" fill="#6b4848"/><rect x="390.50" y="84.60" width="8.80" height="9.10" fill="#e8962a"/><line x1="394.90" y1="84.60" x2="394.90" y2="93.70" stroke="#b06818" stroke-width="0.5"/><rect x="394.00" y="67.50" width="5.30" height="5.00" fill="#e8962a"/><rect x="399.30" y="63.30" width="4.20" height="9.20" fill="#c86c4c"/><rect x="399.30" y="80.40" width="4.20" height="13.30" fill="#c86c4c"/><rect x="403.50" y="59.40" width="4.20" height="34.30" fill="#f27676"/><rect x="407.70" y="59.50" width="16.60" height="3.80" fill="#c87850"/><rect x="228.30" y="59.50" width="8.60" height="3.80" fill="#c87850"/><rect x="344.80" y="35.00" width="14.80" height="10.40" fill="#4a4a4a"/><rect x="344.00" y="44.60" width="16.40" height="1.40" fill="#777"/><rect x="346.00" y="36.30" width="2.40" height="3.20" fill="#b8b8b8"/><rect x="346.00" y="40.50" width="2.40" height="3.20" fill="#b8b8b8"/><rect x="349.30" y="36.30" width="2.40" height="3.20" fill="#b8b8b8"/><rect x="349.30" y="40.50" width="2.40" height="3.20" fill="#b8b8b8"/><rect x="352.60" y="36.30" width="2.40" height="3.20" fill="#b8b8b8"/><rect x="352.60" y="40.50" width="2.40" height="3.20" fill="#b8b8b8"/><rect x="355.90" y="36.30" width="2.40" height="3.20" fill="#b8b8b8"/><rect x="355.90" y="40.50" width="2.40" height="3.20" fill="#b8b8b8"/><rect x="369.10" y="34.50" width="4.40" height="8.40" fill="#f27676"/><rect x="369.60" y="42.90" width="3.40" height="11.80" fill="#eee"/><rect x="370.20" y="45.00" width="2.20" height="2.00" fill="#333"/><rect x="370.20" y="49.00" width="2.20" height="2.00" fill="#333"/><ellipse cx="360.5" cy="54.6" rx="4.8" ry="4.6" fill="#38a048" stroke="#e8ffe8" stroke-width="0.7"/><rect x="357.50" y="52.50" width="6.00" height="2.50" fill="#e8ffe8"/><rect x="365.50" y="54.70" width="8.00" height="4.70" fill="#d878d0"/><rect x="373.50" y="54.70" width="4.90" height="4.70" fill="#b9a545"/><line x1="383.00" y1="51.00" x2="399.00" y2="51.00" stroke="#333" stroke-width="0.9"/><line x1="388.00" y1="52.00" x2="394.00" y2="59.00" stroke="#333" stroke-width="0.7"/><line x1="394.00" y1="52.00" x2="388.00" y2="59.00" stroke="#333" stroke-width="0.7"/><rect x="392.00" y="43.00" width="2.50" height="8.00" fill="#fff"/><rect x="385.00" y="49.00" width="6.00" height="1.60" fill="#e09030"/><rect x="410.70" y="34.50" width="9.70" height="24.90" fill="#b9a545" opacity="0.85"/><rect x="413.00" y="34.50" width="1.50" height="24.90" fill="#e2942f"/><line x1="415.90" y1="34.50" x2="415.90" y2="114.60" stroke="#f0f0e0" stroke-width="0.5"/><rect x="416.00" y="106.30" width="86.40" height="8.30" fill="#ffffff"/><rect x="416.00" y="108.50" width="11.00" height="6.10" fill="#f088e0"/><rect x="427.50" y="110.00" width="3.00" height="4.60" fill="#333"/><rect x="438.00" y="111.00" width="1.00" height="1.50" fill="#333"/><rect x="486.00" y="108.00" width="1.00" height="6.00" fill="#333"/><rect x="488.00" y="108.00" width="1.00" height="6.00" fill="#333"/><rect x="490.00" y="108.00" width="1.00" height="6.00" fill="#333"/><rect x="492.00" y="108.00" width="1.00" height="6.00" fill="#333"/><rect x="494.00" y="108.00" width="1.00" height="6.00" fill="#333"/><rect x="496.00" y="108.00" width="1.00" height="6.00" fill="#333"/><rect x="498.00" y="108.00" width="1.00" height="6.00" fill="#333"/><rect x="500.00" y="108.00" width="1.00" height="6.00" fill="#333"/><rect x="424.30" y="59.40" width="93.40" height="3.90" fill="#f27676"/><rect x="424.30" y="59.40" width="3.90" height="38.10" fill="#f27676"/><rect x="428.20" y="63.30" width="3.80" height="30.20" fill="#c86c4c"/><rect x="424.30" y="93.50" width="128.00" height="4.40" fill="#c8744c"/><rect x="437.00" y="34.50" width="5.20" height="24.90" fill="#b9a545" opacity="0.85"/><rect x="429.40" y="37.70" width="16.60" height="8.20" fill="#207888"/><rect x="431.50" y="39.30" width="12.50" height="5.00" fill="#2aa8b8"/><rect x="434.00" y="40.00" width="7.00" height="3.50" fill="#e0a030"/><rect x="467.00" y="38.00" width="4.50" height="12.00" fill="#207888"/><rect x="468.00" y="39.50" width="2.50" height="9.00" fill="#e0c040"/><rect x="446.00" y="52.00" width="6.00" height="1.50" fill="#c02020"/><rect x="476.60" y="34.50" width="11.70" height="24.90" fill="#f4fff4"/><rect x="477.20" y="35.00" width="1.80" height="1.80" fill="#a8e0b0"/><rect x="480.10" y="35.00" width="1.80" height="1.80" fill="#a8e0b0"/><rect x="483.00" y="35.00" width="1.80" height="1.80" fill="#a8e0b0"/><rect x="485.90" y="35.00" width="1.80" height="1.80" fill="#a8e0b0"/><rect x="477.20" y="37.90" width="1.80" height="1.80" fill="#a8e0b0"/><rect x="480.10" y="37.90" width="1.80" height="1.80" fill="#a8e0b0"/><rect x="483.00" y="37.90" width="1.80" height="1.80" fill="#a8e0b0"/><rect x="485.90" y="37.90" width="1.80" height="1.80" fill="#a8e0b0"/><rect x="477.20" y="40.80" width="1.80" height="1.80" fill="#a8e0b0"/><rect x="480.10" y="40.80" width="1.80" height="1.80" fill="#a8e0b0"/><rect x="483.00" y="40.80" width="1.80" height="1.80" fill="#a8e0b0"/><rect x="485.90" y="40.80" width="1.80" height="1.80" fill="#a8e0b0"/><rect x="477.20" y="43.70" width="1.80" height="1.80" fill="#a8e0b0"/><rect x="480.10" y="43.70" width="1.80" height="1.80" fill="#a8e0b0"/><rect x="483.00" y="43.70" width="1.80" height="1.80" fill="#a8e0b0"/><rect x="485.90" y="43.70" width="1.80" height="1.80" fill="#a8e0b0"/><rect x="477.20" y="46.60" width="1.80" height="1.80" fill="#a8e0b0"/><rect x="480.10" y="46.60" width="1.80" height="1.80" fill="#a8e0b0"/><rect x="483.00" y="46.60" width="1.80" height="1.80" fill="#a8e0b0"/><rect x="485.90" y="46.60" width="1.80" height="1.80" fill="#a8e0b0"/><rect x="477.20" y="49.50" width="1.80" height="1.80" fill="#a8e0b0"/><rect x="480.10" y="49.50" width="1.80" height="1.80" fill="#a8e0b0"/><rect x="483.00" y="49.50" width="1.80" height="1.80" fill="#a8e0b0"/><rect x="485.90" y="49.50" width="1.80" height="1.80" fill="#a8e0b0"/><rect x="477.20" y="52.40" width="1.80" height="1.80" fill="#a8e0b0"/><rect x="480.10" y="52.40" width="1.80" height="1.80" fill="#a8e0b0"/><rect x="483.00" y="52.40" width="1.80" height="1.80" fill="#a8e0b0"/><rect x="485.90" y="52.40" width="1.80" height="1.80" fill="#a8e0b0"/><rect x="477.20" y="55.30" width="1.80" height="1.80" fill="#a8e0b0"/><rect x="480.10" y="55.30" width="1.80" height="1.80" fill="#a8e0b0"/><rect x="483.00" y="55.30" width="1.80" height="1.80" fill="#a8e0b0"/><rect x="485.90" y="55.30" width="1.80" height="1.80" fill="#a8e0b0"/><rect x="477.20" y="58.20" width="1.80" height="1.80" fill="#a8e0b0"/><rect x="480.10" y="58.20" width="1.80" height="1.80" fill="#a8e0b0"/><rect x="483.00" y="58.20" width="1.80" height="1.80" fill="#a8e0b0"/><rect x="485.90" y="58.20" width="1.80" height="1.80" fill="#a8e0b0"/><rect x="480.70" y="46.90" width="3.80" height="12.50" fill="#f27676"/><rect x="471.50" y="53.50" width="5.10" height="5.90" fill="#b9a545"/><circle cx="488.5" cy="55" r="4" fill="#777" stroke="#333" stroke-width="0.8"/><circle cx="488.5" cy="55" r="2" fill="#bbb"/><rect x="497.20" y="34.50" width="5.20" height="24.50" fill="#b9a545" opacity="0.85"/><rect x="502.40" y="34.50" width="11.50" height="24.20" fill="#207888"/><rect x="504.00" y="36.00" width="8.30" height="5.00" fill="#2aa8b8"/><rect x="504.00" y="43.00" width="8.30" height="5.00" fill="#2aa8b8"/><rect x="504.00" y="50.00" width="8.30" height="7.00" fill="#2aa8b8"/><rect x="513.90" y="34.50" width="1.60" height="24.50" fill="#e2942f"/><rect x="510.00" y="52.50" width="8.00" height="6.90" fill="#555"/><rect x="519.00" y="51.50" width="8.00" height="2.00" fill="#c02020"/><rect x="447.00" y="58.70" width="2.60" height="2.50" fill="#f4fff4"/><rect x="451.10" y="58.70" width="2.60" height="2.50" fill="#f4fff4"/><rect x="455.20" y="58.70" width="2.60" height="2.50" fill="#f4fff4"/><rect x="459.30" y="58.70" width="2.60" height="2.50" fill="#f4fff4"/><rect x="463.40" y="58.70" width="2.60" height="2.50" fill="#f4fff4"/><rect x="467.50" y="58.70" width="2.60" height="2.50" fill="#f4fff4"/><rect x="471.60" y="58.70" width="2.60" height="2.50" fill="#f4fff4"/><rect x="475.70" y="58.70" width="2.60" height="2.50" fill="#f4fff4"/><rect x="497.50" y="59.00" width="4.50" height="4.50" fill="#e060c8"/><rect x="510.00" y="59.00" width="4.50" height="4.50" fill="#e060c8"/><rect x="438.00" y="66.00" width="7.00" height="6.50" fill="#c080c0"/><rect x="437.60" y="76.10" width="12.80" height="17.40" fill="#207888"/><rect x="439.50" y="78.00" width="9.00" height="4.00" fill="#2aa8b8"/><rect x="439.50" y="84.00" width="9.00" height="4.00" fill="#2aa8b8"/><rect x="446.00" y="87.50" width="8.00" height="6.00" fill="#e0b040"/><polygon points="446.00,63.30 451.00,63.30 483.00,93.50 478.00,93.50" fill="#f4f4ff"/><line x1="446.00" y1="63.30" x2="480.00" y2="93.50" stroke="#4060e0" stroke-width="0.4"/><rect x="472.00" y="77.00" width="8.00" height="2.00" fill="#c02020"/><rect x="484.50" y="63.30" width="2.50" height="30.20" fill="#8a5030"/><rect x="487.00" y="63.30" width="19.20" height="30.20" fill="#207888"/><rect x="489.00" y="65.50" width="15.50" height="5.00" fill="#2aa8b8"/><rect x="489.00" y="72.50" width="15.50" height="5.50" fill="#e0b040"/><rect x="489.00" y="80.00" width="15.50" height="12.00" fill="#2aa8b8"/><circle cx="493" cy="84" r="2.8" fill="#eee"/><circle cx="500.5" cy="84" r="2.8" fill="#eee"/><rect x="506.20" y="63.30" width="7.70" height="30.20" fill="#6fcf74"/><rect x="509.00" y="66.00" width="5.00" height="5.00" fill="#a02040"/><rect x="502.00" y="88.50" width="8.00" height="5.00" fill="#999"/><rect x="510.00" y="87.50" width="8.00" height="6.00" fill="#e0b040"/><rect x="513.90" y="63.30" width="5.10" height="30.20" fill="#f8b878"/><polygon points="519.00,59.50 552.30,93.50 519.00,93.50" fill="#ffffff"/><polygon points="517.70,59.40 523.00,59.40 552.30,89.00 552.30,93.50 550.00,93.50" fill="#e8e8ff" opacity="0.0"/><line x1="519.00" y1="59.50" x2="552.30" y2="93.00" stroke="#4060e0" stroke-width="0.4"/><rect x="544.20" y="34.50" width="8.10" height="7.90" fill="#2aa8b8"/><rect x="544.20" y="34.50" width="8.10" height="1.50" fill="#207888"/><rect x="540.90" y="43.10" width="11.40" height="2.70" fill="#ffffff"/><rect x="542.00" y="38.00" width="2.20" height="4.40" fill="#207888"/><polygon points="536.00,34.50 539.00,34.50 545.00,42.40 542.00,42.40" fill="#f4f4ff"/><rect x="549.50" y="76.00" width="2.80" height="3.00" fill="#c02020"/><rect x="549.00" y="52.00" width="3.00" height="4.00" fill="#222"/><rect x="148.00" y="140.30" width="404.30" height="106.80" fill="#24b0bc"/><rect x="148.00" y="157.80" width="96.00" height="4.00" fill="#a85c66"/><rect x="158.90" y="165.00" width="5.40" height="6.00" fill="#e8a030"/><line x1="177.80" y1="162.00" x2="177.80" y2="170.00" stroke="#5a6a70" stroke-width="1.2"/><line x1="177.80" y1="162.00" x2="177.80" y2="170.00" stroke="#d8e0e0" stroke-width="0.5"/><line x1="177.80" y1="170.00" x2="219.70" y2="170.00" stroke="#5a6a70" stroke-width="1.2"/><line x1="177.80" y1="170.00" x2="219.70" y2="170.00" stroke="#d8e0e0" stroke-width="0.5"/><line x1="186.00" y1="162.00" x2="186.00" y2="182.00" stroke="#5a6a70" stroke-width="1.2"/><line x1="186.00" y1="162.00" x2="186.00" y2="182.00" stroke="#d8e0e0" stroke-width="0.5"/><line x1="186.00" y1="182.00" x2="205.00" y2="182.00" stroke="#5a6a70" stroke-width="1.2"/><line x1="186.00" y1="182.00" x2="205.00" y2="182.00" stroke="#d8e0e0" stroke-width="0.5"/><line x1="200.00" y1="162.00" x2="200.00" y2="175.00" stroke="#5a6a70" stroke-width="1.2"/><line x1="200.00" y1="162.00" x2="200.00" y2="175.00" stroke="#d8e0e0" stroke-width="0.5"/><line x1="213.00" y1="170.00" x2="213.00" y2="183.00" stroke="#5a6a70" stroke-width="1.2"/><line x1="213.00" y1="170.00" x2="213.00" y2="183.00" stroke="#d8e0e0" stroke-width="0.5"/><line x1="205.00" y1="183.00" x2="219.70" y2="183.00" stroke="#5a6a70" stroke-width="1.2"/><line x1="205.00" y1="183.00" x2="219.70" y2="183.00" stroke="#d8e0e0" stroke-width="0.5"/><rect x="198.50" y="175.50" width="13.50" height="8.00" fill="#eee" stroke="#444" stroke-width="0.6"/><rect x="201.00" y="177.50" width="8.50" height="4.00" fill="#888"/><rect x="148.00" y="191.60" width="11.50" height="4.10" fill="#f27676"/><rect x="148.00" y="195.70" width="2.50" height="30.30" fill="#a85c66"/><rect x="150.50" y="195.70" width="3.50" height="30.30" fill="#d05858"/><rect x="154.00" y="195.70" width="3.00" height="30.30" fill="#f27676"/><rect x="157.00" y="195.70" width="2.50" height="30.30" fill="#d05858"/><polygon points="159.50,195.70 190.50,226.00 159.50,226.00" fill="#ffffff"/><line x1="148.00" y1="183.50" x2="155.00" y2="183.50" stroke="#333" stroke-width="0.6"/><line x1="155.00" y1="183.50" x2="190.00" y2="218.00" stroke="#333" stroke-width="0.6"/><line x1="155.00" y1="181.00" x2="155.00" y2="195.00" stroke="#333" stroke-width="0.6"/><line x1="190.00" y1="214.00" x2="190.00" y2="226.00" stroke="#333" stroke-width="0.6"/><line x1="159.50" y1="195.70" x2="190.50" y2="226.00" stroke="#4060e0" stroke-width="0.4"/><rect x="159.00" y="183.50" width="8.00" height="2.00" fill="#c02020"/><rect x="193.00" y="218.00" width="8.00" height="2.00" fill="#c02020"/><rect x="148.00" y="226.00" width="404.30" height="4.20" fill="#a85c66"/><rect x="222.40" y="195.70" width="10.80" height="30.30" fill="#9aa066"/><rect x="219.00" y="217.00" width="9.00" height="9.00" fill="#503868"/><rect x="220.50" y="218.50" width="6.00" height="3.50" fill="#c8c8d8"/><rect x="228.50" y="217.00" width="8.50" height="9.00" fill="#38a048"/><rect x="230.00" y="218.00" width="5.50" height="3.50" fill="#e8ffe8"/><line x1="228.20" y1="140.30" x2="228.20" y2="247.10" stroke="#e8f4f4" stroke-width="0.5"/><rect x="228.30" y="140.30" width="12.20" height="3.70" fill="#ffffff"/><rect x="241.40" y="140.40" width="59.10" height="3.90" fill="#f27676"/><rect x="300.50" y="140.50" width="12.90" height="3.50" fill="#ffffff"/><rect x="241.40" y="145.00" width="5.20" height="6.40" fill="#a85c66"/><polygon points="243.00,151.40 249.50,151.40 262.00,161.80 252.00,161.80" fill="#a85c66"/><rect x="246.60" y="145.00" width="50.10" height="4.40" fill="#9aa066"/><rect x="296.70" y="145.00" width="4.30" height="16.80" fill="#a85c66"/><rect x="299.50" y="157.80" width="43.70" height="4.00" fill="#a85c66"/><rect x="236.50" y="162.40" width="21.60" height="29.20" fill="#ffffff"/><rect x="258.10" y="161.90" width="3.50" height="29.70" fill="#f27676"/><rect x="261.60" y="161.90" width="4.10" height="29.70" fill="#a85c66"/><polygon points="261.50,161.90 266.00,161.90 292.50,188.00 292.50,191.60 290.00,191.60" fill="#f4f4ff"/><line x1="250.00" y1="148.00" x2="291.40" y2="191.60" stroke="#3878e0" stroke-width="0.4"/><line x1="268.00" y1="162.00" x2="296.00" y2="189.00" stroke="#444" stroke-width="0.6"/><line x1="271.00" y1="162.00" x2="271.00" y2="166.00" stroke="#444" stroke-width="0.5"/><line x1="293.00" y1="184.00" x2="293.00" y2="191.00" stroke="#444" stroke-width="0.5"/><rect x="294.00" y="186.00" width="8.00" height="2.00" fill="#c02020"/><rect x="228.30" y="191.60" width="192.50" height="4.10" fill="#f27676"/><rect x="228.30" y="195.70" width="4.90" height="30.30" fill="#9aa066"/><rect x="250.60" y="205.40" width="15.20" height="11.60" fill="#c8c8c8"/><line x1="251.00" y1="205.40" x2="251.00" y2="217.00" stroke="#444" stroke-width="1"/><line x1="255.85" y1="205.40" x2="255.85" y2="217.00" stroke="#444" stroke-width="1"/><line x1="260.70" y1="205.40" x2="260.70" y2="217.00" stroke="#444" stroke-width="1"/><line x1="265.55" y1="205.40" x2="265.55" y2="217.00" stroke="#444" stroke-width="1"/><line x1="250.60" y1="205.80" x2="265.80" y2="205.80" stroke="#444" stroke-width="0.9"/><line x1="250.60" y1="211.20" x2="265.80" y2="211.20" stroke="#444" stroke-width="1"/><rect x="249.50" y="216.50" width="17.00" height="1.30" fill="#444"/><rect x="266.50" y="217.00" width="8.60" height="9.00" fill="#e89828"/><line x1="270.80" y1="217.00" x2="270.80" y2="226.00" stroke="#a05818" stroke-width="0.6"/><rect x="279.20" y="212.40" width="5.80" height="4.60" fill="#e89828"/><line x1="278.00" y1="217.50" x2="296.00" y2="217.50" stroke="#333" stroke-width="1"/><line x1="283.00" y1="218.00" x2="291.00" y2="226.00" stroke="#333" stroke-width="0.7"/><line x1="291.00" y1="218.00" x2="283.00" y2="226.00" stroke="#333" stroke-width="0.7"/><rect x="323.30" y="164.00" width="2.90" height="62.00" fill="#b8b8b8"/><line x1="323.30" y1="164.00" x2="323.30" y2="226.00" stroke="#444" stroke-width="0.5"/><line x1="326.20" y1="164.00" x2="326.20" y2="226.00" stroke="#444" stroke-width="0.5"/><ellipse cx="318" cy="171" rx="4.2" ry="4.5" fill="#d8a030" stroke="#6b4a20" stroke-width="0.6"/><line x1="318.00" y1="161.90" x2="318.00" y2="166.50" stroke="#444" stroke-width="0.5"/><rect x="324.00" y="163.00" width="10.00" height="4.00" fill="#ddd" stroke="#444" stroke-width="0.5"/><rect x="310.00" y="188.00" width="12.00" height="4.50" fill="#ddd" stroke="#444" stroke-width="0.5"/><line x1="314.00" y1="188.00" x2="326.00" y2="178.00" stroke="#888" stroke-width="0.6"/><rect x="338.60" y="161.90" width="5.40" height="29.70" fill="#9aa066"/><rect x="334.00" y="184.50" width="6.00" height="2.00" fill="#c02020"/><rect x="344.50" y="188.50" width="5.00" height="4.50" fill="#e060c8"/><rect x="341.50" y="200.80" width="7.00" height="3.70" fill="#8a5252"/><rect x="342.50" y="204.50" width="5.00" height="17.50" fill="#8a5252"/><rect x="339.40" y="222.00" width="10.10" height="4.00" fill="#7a4444"/><circle cx="345" cy="203" r="2.3" fill="#e0a040" stroke="#5a3030" stroke-width="0.5"/><rect x="344.20" y="209.00" width="1.60" height="9.00" fill="#d89848"/><rect x="351.60" y="195.80" width="13.00" height="30.20" fill="#f0fff4"/><rect x="351.60" y="195.80" width="3.25" height="3.03" fill="#a0e0b8"/><rect x="358.10" y="195.80" width="3.25" height="3.03" fill="#a0e0b8"/><rect x="354.85" y="198.83" width="3.25" height="3.03" fill="#a0e0b8"/><rect x="361.35" y="198.83" width="3.25" height="3.03" fill="#a0e0b8"/><rect x="351.60" y="201.86" width="3.25" height="3.03" fill="#a0e0b8"/><rect x="358.10" y="201.86" width="3.25" height="3.03" fill="#a0e0b8"/><rect x="354.85" y="204.89" width="3.25" height="3.03" fill="#a0e0b8"/><rect x="361.35" y="204.89" width="3.25" height="3.03" fill="#a0e0b8"/><rect x="351.60" y="207.92" width="3.25" height="3.03" fill="#a0e0b8"/><rect x="358.10" y="207.92" width="3.25" height="3.03" fill="#a0e0b8"/><rect x="354.85" y="210.95" width="3.25" height="3.03" fill="#a0e0b8"/><rect x="361.35" y="210.95" width="3.25" height="3.03" fill="#a0e0b8"/><rect x="351.60" y="213.98" width="3.25" height="3.03" fill="#a0e0b8"/><rect x="358.10" y="213.98" width="3.25" height="3.03" fill="#a0e0b8"/><rect x="354.85" y="217.01" width="3.25" height="3.03" fill="#a0e0b8"/><rect x="361.35" y="217.01" width="3.25" height="3.03" fill="#a0e0b8"/><rect x="351.60" y="220.04" width="3.25" height="3.03" fill="#a0e0b8"/><rect x="358.10" y="220.04" width="3.25" height="3.03" fill="#a0e0b8"/><rect x="354.85" y="223.07" width="3.25" height="3.03" fill="#a0e0b8"/><rect x="361.35" y="223.07" width="3.25" height="3.03" fill="#a0e0b8"/><rect x="356.40" y="213.40" width="3.90" height="12.60" fill="#f27676"/><rect x="347.00" y="221.30" width="5.30" height="4.70" fill="#e89828"/><rect x="364.60" y="221.30" width="5.00" height="4.70" fill="#b0a860"/><rect x="395.00" y="140.50" width="4.60" height="21.30" fill="#a85c66"/><rect x="339.10" y="140.50" width="4.10" height="21.30" fill="#a85c66"/><rect x="339.10" y="140.50" width="60.50" height="3.80" fill="#a85c66"/><rect x="343.20" y="144.30" width="51.80" height="5.30" fill="#9aa066"/><line x1="394.60" y1="145.00" x2="372.00" y2="168.00" stroke="#3878e0" stroke-width="0.4" stroke-dasharray="1.5 1.2"/><polygon points="381.00,162.00 385.00,162.00 355.00,191.60 350.00,191.60 350.00,189.00" fill="#f4f4ff"/><line x1="377.00" y1="162.00" x2="350.00" y2="188.00" stroke="#444" stroke-width="0.6"/><line x1="372.00" y1="162.00" x2="350.00" y2="183.00" stroke="#888" stroke-width="0.5"/><rect x="399.20" y="157.80" width="153.10" height="4.00" fill="#a85c66"/><rect x="369.50" y="178.60" width="16.20" height="13.00" fill="#4a2c2c"/><rect x="371.00" y="181.00" width="6.00" height="8.50" fill="#6b4444"/><rect x="378.00" y="181.00" width="6.00" height="8.50" fill="#6b4444"/><rect x="376.50" y="174.50" width="4.50" height="4.10" fill="#e89828"/><rect x="385.70" y="182.70" width="8.90" height="8.90" fill="#e89828"/><line x1="390.00" y1="182.70" x2="390.00" y2="191.60" stroke="#a05818" stroke-width="0.5"/><rect x="394.60" y="186.00" width="4.40" height="1.30" fill="#c02020"/><rect x="402.70" y="161.90" width="5.40" height="29.70" fill="#9aa066"/><rect x="411.40" y="161.90" width="9.40" height="64.10" fill="#9aa066"/><rect x="407.00" y="184.00" width="8.00" height="7.60" fill="#503868"/><rect x="408.50" y="185.00" width="5.00" height="3.00" fill="#d0d0e0"/><rect x="406.50" y="190.00" width="9.50" height="2.00" fill="#d060c8"/><rect x="228.30" y="238.10" width="84.70" height="9.00" fill="#ffffff"/><rect x="228.30" y="240.50" width="9.70" height="6.60" fill="#f088e0"/><rect x="238.50" y="242.00" width="3.00" height="5.10" fill="#333"/><rect x="249.00" y="243.00" width="1.00" height="1.50" fill="#333"/><rect x="297.00" y="240.00" width="1.00" height="6.00" fill="#333"/><rect x="299.00" y="240.00" width="1.00" height="6.00" fill="#333"/><rect x="301.00" y="240.00" width="1.00" height="6.00" fill="#333"/><rect x="303.00" y="240.00" width="1.00" height="6.00" fill="#333"/><rect x="305.00" y="240.00" width="1.00" height="6.00" fill="#333"/><rect x="307.00" y="240.00" width="1.00" height="6.00" fill="#333"/><rect x="309.00" y="240.00" width="1.00" height="6.00" fill="#333"/><rect x="311.00" y="240.00" width="1.00" height="6.00" fill="#333"/><line x1="416.10" y1="140.30" x2="416.10" y2="247.10" stroke="#e8f4f4" stroke-width="0.5"/><rect x="416.00" y="140.30" width="85.90" height="3.70" fill="#ffffff"/><rect x="420.80" y="191.60" width="131.50" height="4.10" fill="#f27676"/><rect x="407.70" y="192.00" width="16.70" height="3.20" fill="#c070a0"/><rect x="433.80" y="170.00" width="8.10" height="8.80" fill="#503070"/><rect x="435.30" y="171.50" width="5.10" height="5.80" fill="#2a2a70"/><line x1="437.85" y1="168.30" x2="437.85" y2="170.00" stroke="#333" stroke-width="0.5"/><rect x="446.00" y="170.00" width="8.60" height="8.80" fill="#8a5a30"/><rect x="447.50" y="171.50" width="5.60" height="5.80" fill="#ececec"/><line x1="450.30" y1="168.30" x2="450.30" y2="170.00" stroke="#333" stroke-width="0.5"/><rect x="458.60" y="170.00" width="9.00" height="8.80" fill="#8a1828"/><rect x="460.10" y="171.50" width="6.00" height="5.80" fill="#e8b890"/><line x1="463.10" y1="168.30" x2="463.10" y2="170.00" stroke="#333" stroke-width="0.5"/><rect x="489.20" y="170.00" width="12.20" height="8.80" fill="#4a1818"/><rect x="490.70" y="171.50" width="9.20" height="5.80" fill="#c01828"/><line x1="495.30" y1="168.30" x2="495.30" y2="170.00" stroke="#333" stroke-width="0.5"/><rect x="510.00" y="170.00" width="8.90" height="8.80" fill="#907030"/><rect x="511.50" y="171.50" width="5.90" height="5.80" fill="#5838a0"/><line x1="514.45" y1="168.30" x2="514.45" y2="170.00" stroke="#333" stroke-width="0.5"/><rect x="539.70" y="170.00" width="9.50" height="8.80" fill="#8a1828"/><rect x="541.20" y="171.50" width="6.50" height="5.80" fill="#f0d0c0"/><line x1="544.45" y1="168.30" x2="544.45" y2="170.00" stroke="#333" stroke-width="0.5"/><rect x="476.20" y="161.90" width="4.10" height="14.10" fill="#f27676"/><line x1="476.20" y1="161.90" x2="476.20" y2="176.00" stroke="#a04040" stroke-width="0.4"/><line x1="480.30" y1="161.90" x2="480.30" y2="176.00" stroke="#a04040" stroke-width="0.4"/><rect x="475.70" y="176.00" width="5.10" height="4.00" fill="#f4f4f4"/><rect x="474.70" y="180.00" width="6.50" height="7.50" fill="#8a6a40"/><rect x="476.20" y="182.00" width="4.00" height="4.00" fill="#f0e8d8"/><rect x="470.70" y="187.30" width="8.50" height="4.30" fill="#e070c8"/><rect x="527.00" y="161.90" width="4.10" height="14.10" fill="#f27676"/><line x1="527.00" y1="161.90" x2="527.00" y2="176.00" stroke="#a04040" stroke-width="0.4"/><line x1="531.10" y1="161.90" x2="531.10" y2="176.00" stroke="#a04040" stroke-width="0.4"/><rect x="526.50" y="176.00" width="5.10" height="4.00" fill="#f4f4f4"/><rect x="525.50" y="180.00" width="6.50" height="7.50" fill="#8a6a40"/><rect x="527.00" y="182.00" width="4.00" height="4.00" fill="#f0e8d8"/><rect x="521.50" y="187.30" width="8.50" height="4.30" fill="#e070c8"/><rect x="484.00" y="186.00" width="9.00" height="5.60" fill="#333"/><rect x="486.00" y="184.50" width="5.00" height="2.50" fill="#3090c0"/><rect x="531.50" y="187.30" width="4.50" height="4.30" fill="#c8a860"/><rect x="436.50" y="182.70" width="10.00" height="8.90" fill="#e89828"/><line x1="441.50" y1="182.70" x2="441.50" y2="191.60" stroke="#a05818" stroke-width="0.5"/><rect x="438.40" y="195.70" width="2.40" height="30.30" fill="#a8a8a8"/><line x1="438.40" y1="195.70" x2="438.40" y2="226.00" stroke="#444" stroke-width="0.5"/><line x1="440.80" y1="195.70" x2="440.80" y2="226.00" stroke="#444" stroke-width="0.5"/><rect x="486.20" y="195.70" width="2.20" height="30.30" fill="#a8a8a8"/><line x1="486.20" y1="195.70" x2="486.20" y2="226.00" stroke="#444" stroke-width="0.5"/><line x1="488.40" y1="195.70" x2="488.40" y2="226.00" stroke="#444" stroke-width="0.5"/><rect x="498.20" y="195.70" width="2.20" height="30.30" fill="#a8a8a8"/><line x1="498.20" y1="195.70" x2="498.20" y2="226.00" stroke="#444" stroke-width="0.5"/><line x1="500.40" y1="195.70" x2="500.40" y2="226.00" stroke="#444" stroke-width="0.5"/><line x1="474.00" y1="195.70" x2="474.00" y2="199.00" stroke="#333" stroke-width="0.5"/><polygon points="470.00,203.50 478.00,203.50 480.30,207.00 468.00,207.00" fill="#4a3a28"/><rect x="471.50" y="199.00" width="5.00" height="4.50" fill="#6a5030"/><rect x="470.00" y="207.00" width="8.50" height="1.20" fill="#e8a030"/><rect x="536.00" y="195.70" width="12.50" height="30.30" fill="#a85c66"/><rect x="541.00" y="195.70" width="3.70" height="30.30" fill="#f27676"/><rect x="514.00" y="216.50" width="9.00" height="9.50" fill="#e89828"/><line x1="518.50" y1="216.50" x2="518.50" y2="226.00" stroke="#a05818" stroke-width="0.5"/><ellipse cx="531.7" cy="221" rx="4.6" ry="4.6" fill="#38a048" stroke="#503868" stroke-width="0.7"/><rect x="529.00" y="218.00" width="5.50" height="2.50" fill="#e8ffe8"/><rect x="527.00" y="199.70" width="4.60" height="4.60" fill="#e89828"/><rect x="492.00" y="216.00" width="2.50" height="8.00" fill="#c02020"/><rect x="481.70" y="226.00" width="23.60" height="21.10" fill="#f27676"/><rect x="484.70" y="230.50" width="17.50" height="4.40" fill="#24b0bc"/><rect x="486.00" y="236.00" width="15.00" height="11.10" fill="#d8d8d8"/><rect x="484.20" y="225.90" width="18.00" height="4.60" fill="#e8a848"/><rect x="485.50" y="226.80" width="2.20" height="2.70" fill="#c88830"/><rect x="488.80" y="226.80" width="2.20" height="2.70" fill="#c88830"/><rect x="492.10" y="226.80" width="2.20" height="2.70" fill="#c88830"/><rect x="495.40" y="226.80" width="2.20" height="2.70" fill="#c88830"/><rect x="498.70" y="226.80" width="2.20" height="2.70" fill="#c88830"/><line x1="486.50" y1="234.90" x2="486.50" y2="240.00" stroke="#333" stroke-width="0.7"/><line x1="490.50" y1="234.90" x2="490.50" y2="240.00" stroke="#333" stroke-width="0.7"/><line x1="496.00" y1="234.90" x2="496.00" y2="240.00" stroke="#333" stroke-width="0.7"/><line x1="500.00" y1="234.90" x2="500.00" y2="240.00" stroke="#333" stroke-width="0.7"/><rect x="485.50" y="240.00" width="16.00" height="2.00" fill="#444"/><rect x="487.50" y="242.00" width="12.00" height="4.00" fill="#f8f8f8"/><rect x="486.00" y="245.50" width="15.00" height="1.60" fill="#555"/><rect x="416.00" y="238.10" width="64.30" height="9.00" fill="#ffffff"/><rect x="416.00" y="240.50" width="11.00" height="6.60" fill="#f088e0"/><rect x="427.50" y="242.00" width="3.00" height="5.10" fill="#333"/><rect x="438.00" y="243.00" width="1.00" height="1.50" fill="#333"/><rect x="436.20" y="172.80" width="2.80" height="3.20" fill="#e0c040"/><rect x="494.00" y="173.50" width="4.00" height="2.00" fill="#f0e0e0"/><text x="322.3" y="137.600" font-size="5.4" fill="#909090" text-anchor="middle" font-family="Liberation Sans, sans-serif" style="shape-rendering:auto">1F - 5</text><text x="510.3" y="137.600" font-size="5.4" fill="#909090" text-anchor="middle" font-family="Liberation Sans, sans-serif">1F - 6</text></svg>
</div>
<div class="ab" style="left:1293px;top:81px;width:17px;height:557px;background:#fafafa"></div>
<div class="ab" style="left:1297.5px;top:231px;width:7px;height:136px;border-radius:3.5px;background:#dadada"></div>
<div class="ab" style="left:903px;top:625.5px;width:235px;height:8px;border-radius:4px;background:#dadada"></div>
<div class="ab" style="left:357.5px;top:90px;width:36px;height:191px;border-radius:4px;background:rgba(245,245,245,0.93);box-shadow:0 0 3px rgba(0,0,0,.25)"></div>
<div class="ab" style="left:357.5px;top:90px;width:36px;height:38px;border-radius:4px 4px 0 0;background:#d0d0d0"></div>
<svg class="ab" style="left:366px;top:100px" width="20" height="22" viewBox="0 0 20 22"><path d="M4 1.5v16l4.2-3.6 2.6 6 2.8-1.2-2.6-5.9 5.5-.4z" fill="#333"/></svg>
<svg class="ab" style="left:365px;top:139px" width="22" height="22" viewBox="0 0 22 22"><path d="M11 1.5v19M1.5 11h19" stroke="#222" stroke-width="4"/></svg>
<svg class="ab" style="left:365px;top:175px" width="22" height="22" viewBox="0 0 22 22"><path d="M12.5 3l7 7-8 8H6L2.5 14.500z" fill="#333"/><path d="M5.2 12.2l5.5 5.5" stroke="#f5f5f5" stroke-width="1.6"/><path d="M4 19.500h16" stroke="#333" stroke-width="1.6"/></svg>
<svg class="ab" style="left:365px;top:210px" width="22" height="22" viewBox="0 0 22 22"><g fill="#333"><rect x="2" y="3" width="8" height="3.400"/><rect x="11" y="3" width="5" height="3.400"/><rect x="2" y="7.400" width="4" height="3.400"/><rect x="7" y="7.400" width="8" height="3.400"/><rect x="16" y="7.400" width="4" height="3.400"/><rect x="2" y="11.800" width="8" height="3.400"/><rect x="11" y="11.800" width="9" height="3.400"/><rect x="2" y="16.200" width="5" height="3.400"/><rect x="8" y="16.200" width="8" height="3.400"/><rect x="17" y="16.200" width="3" height="3.400"/></g></svg>
<svg class="ab" style="left:364px;top:247px" width="24" height="24" viewBox="0 0 24 24"><path d="M12 3a9 9 0 1 0 0 18c1.500 0 2-1 1.500-2-.6-1.200 0-2.500 1.500-2.500H18a3 3 0 0 0 3-3C21 7.500 17 3 12 3z" fill="none" stroke="#333" stroke-width="2"/><circle cx="7.500" cy="11" r="1.400" fill="#333"/><circle cx="10.500" cy="7.500" r="1.400" fill="#333"/><circle cx="15" cy="8" r="1.400" fill="#333"/><path d="M21.500 3.500L12.500 14.500l-1.500 4 3.500-2.200z" fill="#333" stroke="#f5f5f5" stroke-width="0.800"/></svg>
<div class="ab" style="left:362px;top:596px;width:140px;height:17px;border-radius:8.5px;background:#e4e4e4"></div>
<div class="ab t" style="left:371px;top:598px;font-size:11px;color:#333">Preview as Monochrome</div>
<div class="ab" style="left:346px;top:637px;width:964px;height:33px;background:#fff;border-top:1px solid #d8d8d8;box-sizing:border-box"></div>
<svg class="ab" style="left:356px;top:650.5px" width="11" height="11" viewBox="0 0 10 10"><path d="M0.500 2h9L5 9z" fill="#222"/></svg>
<div class="ab t b" style="left:372px;top:650.500px;font-size:10px;color:#333">DEBUGGER</div>
<div class="ab" style="left:1258px;top:644px;width:47px;height:21px;border-radius:3px;background:#c2185b"></div>
<div class="ab t b c" style="left:1258px;top:649.500px;width:47px;font-size:8.800px;color:#fff;letter-spacing:-0.2px">Build Log</div>
<div class="ab" style="left:346px;top:669.5px;width:964px;height:328px;background:#111;overflow:hidden">
<div class="log" style="position:absolute;left:11px;top:-6px">
<div class="w">Using engine plugin: gbs-uiAltDisplayTextPlugin\engine</div>
<div class="o">Plugin "gbs-uiAltDisplayTextPlugin" is based on an unknown engine version and may not work correctly. Plugin authors can fix</div>
<div class="o">this issue by making sure `engine/engine.json` exists in the plugin containing at least `{"version": "4.2.0-e1"}`.</div>
<div class="w">Using engine plugin: gbs-uiAltDisplayTextPluginOverlay\engine</div>
<div class="o">Plugin "gbs-uiAltDisplayTextPluginOverlay" is based on an unknown engine version and may not work correctly. Plugin authors can</div>
<div class="o">fix this issue by making sure `engine/engine.json` exists in the plugin containing at least `{"version": "4.2.0-e1"}`.</div>
<div class="w">Using engine plugin: If Collision At Tile\engine</div>
<div class="w">Using engine plugin: If Slope At Tile\engine</div>
<div class="w">Using engine plugin: Obstacle_Detector\engine</div>
<div class="w">Using engine plugin: PlatformerPlus\engine</div>
<div class="o">Plugin "PlatformerPlus" was created for an older version of GB Studio and may not work correctly. Plugin uses engine "3.2.0-e4"</div>
<div class="o">but GB Studio is using engine "4.2.0-e1".</div>
<div class="w">Using engine plugin: Set Actor Collision Group\engine</div>
<div class="w">Using engine plugin: Solid Tile Group\engine</div>
<div class="w">Using engine plugin: Sprite_Tile_Replacer\engine</div>
<div class="w">Using engine plugin: TopDown Tile Collisions\engine</div>
<div class="w">Validating Build Files...</div>
<div class="w">Packing Data...</div>
<div class="w">Linking...</div>
<div class="w">Calculating ROM usage...</div>
<div class="w">-</div>
<div class="w">Success! Starting emulator...</div>
<div class="w">Build Time: 24.49s</div>
</div>
<div class="ab" style="left:949px;top:141px;width:7px;height:96px;border-radius:3.5px;background:#4a4a4a"></div>
</div>
<div class="ab" style="left:346px;top:997.500px;width:964px;height:42.500px;background:#fafafa"></div>
<div class="ab btn" style="left:356.5px;top:1007px;width:83.500px;height:24px"></div><div class="ab t c" style="left:356.5px;top:1014px;width:83.500px;font-size:11px;color:#222">Run</div>
<div class="ab btn" style="left:450.5px;top:1007px;width:99px;height:24px"></div><div class="ab t" style="left:461px;top:1014px;font-size:11px;color:#222">Build Options</div>
<svg class="ab" style="left:529px;top:1013px" width="14" height="14" viewBox="0 0 12 12"><path d="M2.500 8L6 4.500 9.500 8" fill="none" stroke="#222" stroke-width="1.700"/></svg>
<div class="ab t" style="left:741px;top:1013px;font-size:10px;color:#555">ROM:</div>
<div class="ab" style="left:775px;top:1009px;width:150px;height:18px;background:#000"></div>
<div class="ab" style="left:775px;top:1009px;width:15px;height:18px;background:#c2185b"></div>
<div class="ab" style="left:794.5px;top:1009px;width:1.500px;height:18px;background:#555"></div>
<div class="ab" style="left:816px;top:1009px;width:1.500px;height:18px;background:#555"></div>
<div class="ab" style="left:855.5px;top:1009px;width:1.500px;height:18px;background:#555"></div>
<div class="ab t" style="left:932px;top:1013px;font-size:10.400px;color:#666">401.32 KiB of 512 KiB used</div>
<div class="ab btn" style="left:1251px;top:1007px;width:48px;height:24px"></div><div class="ab t c" style="left:1251px;top:1014px;width:48px;font-size:11px;color:#222">Clear</div>
<div class="ab" style="left:1310px;top:81px;width:610px;height:959px;background:#f2f2f2;border-left:1px solid #d8d8d8"></div>
<div class="ab" style="left:1906px;top:81px;width:14px;height:959px;background:#f4f4f4"></div>
<div class="ab" style="left:1910px;top:86px;width:8px;height:680px;border-radius:4px;background:#c9c9c9"></div>
<div class="ab" style="left:1311px;top:81px;width:595px;height:37px;background:#f2f2f2;border-bottom:1px solid #dcdcdc"></div>
<div class="ab t b" style="left:1322px;top:94px;font-size:13.500px;color:#222">Initialize Bonus Life</div>
<svg class="ab" style="left:1878px;top:92.5px" width="12" height="12" viewBox="0 0 12 12"><path d="M2.500 4.500L6 8l3.500-3.500" fill="none" stroke="#444" stroke-width="1.8"/></svg>
<div class="ab" style="left:1607px;top:118px;width:1px;height:219px;background:#dcdcdc"></div>
<div class="ab" style="left:1321px;top:129px;width:276.500px;height:48px;background:#bdeff3;border:1px solid #8fcbe3;border-radius:3px;box-shadow:1px 2px 3px rgba(0,0,0,.18)"></div>
<div class="ab t" style="left:1333px;top:139px;font-size:10.5px;color:#8aa">Notes...</div>
<div class="ab" style="left:1608px;top:118px;width:298px;height:30px;background:#fff;border-bottom:1px solid #e0e0e0"></div>
<div class="ab t b" style="left:1619px;top:127px;font-size:10.5px;color:#222">PARAMETERS</div>
<div class="ab t" style="left:1619px;top:162.500px;font-size:11px;color:#555">Variables: 4/10</div>
<div class="ab inp" style="left:1619.500px;top:186px;width:276px;height:26px"></div>
<div class="ab" style="left:1817px;top:186px;width:78.500px;height:26px;border:1px solid #d0d0d0;border-radius:0 4px 4px 0;background:#fafafa"></div>
<div class="ab t" style="left:1628px;top:193px;font-size:10.5px;color:#555">X</div>
<div class="ab t" style="left:1829px;top:193.5px;font-size:11px;color:#333">By Val</div>
<svg class="ab" style="left:1874px;top:193px" width="12" height="12" viewBox="0 0 12 12"><path d="M2.500 4.500L6 8l3.500-3.500" fill="none" stroke="#333" stroke-width="1.8"/></svg>
<div class="ab inp" style="left:1619.500px;top:224px;width:276px;height:26px"></div>
<div class="ab" style="left:1817px;top:224px;width:78.500px;height:26px;border:1px solid #d0d0d0;border-radius:0 4px 4px 0;background:#fafafa"></div>
<div class="ab t" style="left:1628px;top:231px;font-size:10.5px;color:#555">Y</div>
<div class="ab t" style="left:1829px;top:231.5px;font-size:11px;color:#333">By Val</div>
<svg class="ab" style="left:1874px;top:231px" width="12" height="12" viewBox="0 0 12 12"><path d="M2.500 4.500L6 8l3.500-3.500" fill="none" stroke="#333" stroke-width="1.8"/></svg>
<div class="ab inp" style="left:1619.500px;top:262px;width:276px;height:26px"></div>
<div class="ab" style="left:1817px;top:262px;width:78.500px;height:26px;border:1px solid #d0d0d0;border-radius:0 4px 4px 0;background:#fafafa"></div>
<div class="ab t" style="left:1628px;top:269px;font-size:10.5px;color:#555">DisplayAsFlower</div>
<div class="ab t" style="left:1829px;top:269.5px;font-size:11px;color:#333">By Val</div>
<svg class="ab" style="left:1874px;top:269px" width="12" height="12" viewBox="0 0 12 12"><path d="M2.500 4.500L6 8l3.500-3.500" fill="none" stroke="#333" stroke-width="1.8"/></svg>
<div class="ab inp" style="left:1619.500px;top:300px;width:276px;height:26px"></div>
<div class="ab" style="left:1817px;top:300px;width:78.500px;height:26px;border:1px solid #d0d0d0;border-radius:0 4px 4px 0;background:#fafafa"></div>
<div class="ab t" style="left:1628px;top:307px;font-size:10.5px;color:#555">Variable Objet</div>
<div class="ab t" style="left:1829px;top:307.5px;font-size:11px;color:#333">By Ref</div>
<svg class="ab" style="left:1874px;top:307px" width="12" height="12" viewBox="0 0 12 12"><path d="M2.500 4.500L6 8l3.500-3.500" fill="none" stroke="#333" stroke-width="1.8"/></svg>
<div class="ab" style="left:1311px;top:337px;width:595px;height:38px;background:#f0f0f0;border-top:1px solid #dcdcdc;border-bottom:1px solid #dcdcdc"></div>
<div class="ab" style="left:1311px;top:338px;width:55px;height:37px;background:#fff;border-right:1px solid #dcdcdc"></div>
<div class="ab t" style="left:1323px;top:349px;font-size:12.500px;color:#333">Script</div>
<svg class="ab" style="left:1852px;top:350px" width="12" height="13" viewBox="0 0 12 13"><rect x="2" y="6" width="8" height="6" rx="1" fill="#333"/><path d="M4 6V4a2.500 2.500 0 0 1 5 0" fill="none" stroke="#333" stroke-width="1.500"/></svg>
<svg class="ab" style="left:1873px;top:351px" width="12" height="12" viewBox="0 0 12 12"><path d="M2.500 4.500L6 8l3.500-3.500" fill="none" stroke="#444" stroke-width="1.8"/></svg>
<div class="ab" style="left:1311px;top:375px;width:595px;height:636px;background:#fff"></div>
<div class="ab" style="left:1311px;top:375px;width:595px;height:25.500px;background:linear-gradient(#b3e5fc,#84d0f8)"></div>
<svg class="ab" style="left:1319.5px;top:384px" width="9.500" height="9.500" viewBox="0 0 10 10"><path d="M0.500 2h9L5 9z" fill="#123"/></svg>
<div class="ab t b" style="left:1335px;top:383.500px;font-size:11.200px;color:#0d3a5c">If ($VariableObjet &gt; 0)</div>
<svg class="ab" style="left:1878px;top:382px" width="12" height="12" viewBox="0 0 12 12"><path d="M2.500 4.500L6 8l3.500-3.500" fill="none" stroke="#135" stroke-width="1.8"/></svg>
<div class="ab t lab" style="left:1321px;top:412.500px">Condition</div>
<svg class="ab" style="left:1322px;top:430px" width="7" height="27" viewBox="0 0 7 27"><path d="M6 0.5Q1 3 1 9V18Q1 24 6 26.5" fill="none" stroke="#c4c4c4" stroke-width="1.3"/></svg>
<div class="ab inp" style="left:1330.5px;top:430.5px;width:260.5px;height:26.5px"></div>
<div class="ab" style="left:1330.5px;top:430.5px;width:25px;height:26.5px;border:1px solid #d0d0d0;border-radius:4px 0 0 4px;background:#f6f6f6"></div>
<div class="ab t b c" style="left:1330.5px;top:438.5px;width:25px;font-size:10.300px;color:#222">$</div>
<div class="ab t" style="left:1361.5px;top:439.5px;font-size:10.500px;color:#444">$Variable Objet</div>
<svg class="ab" style="left:1570.0px;top:438.0px" width="12" height="12" viewBox="0 0 12 12"><path d="M2.500 4.500L6 8l3.500-3.500" fill="none" stroke="#888" stroke-width="1.2"/></svg>
<div class="ab t b" style="left:1605px;top:438px;font-size:11px;color:#444">&gt;</div>
<div class="ab inp" style="left:1625.5px;top:430.5px;width:261px;height:26.5px"></div>
<div class="ab" style="left:1625.5px;top:430.5px;width:25px;height:26.5px;border:1px solid #d0d0d0;border-radius:4px 0 0 4px;background:#f6f6f6"></div>
<div class="ab t b c" style="left:1625.5px;top:438.5px;width:25px;font-size:11px;color:#222">#</div>
<div class="ab t" style="left:1656.5px;top:439.5px;font-size:10.500px;color:#444">0</div>
<svg class="ab" style="left:1888px;top:430px" width="7" height="27" viewBox="0 0 7 27"><path d="M0 0.5Q5 3 5 9V18Q5 24 0 26.5" fill="none" stroke="#c4c4c4" stroke-width="1.3"/></svg>
<div class="ab" style="left:1322px;top:470px;width:1.500px;height:541px;background:#a8d8f5"></div>
<div class="ab" style="left:1316px;top:479px;width:14px;height:123px;background:#fff"></div>
<div class="ab t b" style="left:1317.500px;top:599px;font-size:7.600px;color:#55aeec;transform:rotate(-90deg);transform-origin:0 0">TRUE&nbsp; IF $VARIABLEOBJET &gt; 0</div>
<div class="ab" style="left:1333px;top:471.500px;width:573px;height:25px;background:linear-gradient(#ffcdbd,#fdaa90)"></div>
<svg class="ab" style="left:1340px;top:480px" width="9.500" height="9.500" viewBox="0 0 10 10"><path d="M0.500 2h9L5 9z" fill="#311"/></svg>
<div class="ab t b" style="left:1357px;top:479.500px;font-size:11.200px;color:#5a1f10">If ($DisplayAsFlower == true)</div>
<svg class="ab" style="left:1878px;top:478px" width="12" height="12" viewBox="0 0 12 12"><path d="M2.500 4.500L6 8l3.500-3.500" fill="none" stroke="#522" stroke-width="1.8"/></svg>
<div class="ab t lab" style="left:1344px;top:508px">Condition</div>
<svg class="ab" style="left:1345px;top:526px" width="7" height="28" viewBox="0 0 7 28"><path d="M6 0.5Q1 3 1 9V19Q1 25 6 27.5" fill="none" stroke="#c4c4c4" stroke-width="1.3"/></svg>
<div class="ab inp" style="left:1353.5px;top:526.8px;width:249px;height:26.5px"></div>
<div class="ab" style="left:1353.5px;top:526.8px;width:25px;height:26.5px;border:1px solid #d0d0d0;border-radius:4px 0 0 4px;background:#f6f6f6"></div>
<div class="ab t b c" style="left:1353.5px;top:534.8px;width:25px;font-size:10.300px;color:#222">$</div>
<div class="ab t" style="left:1384.5px;top:535.8px;font-size:10.500px;color:#444">$DisplayAsFlower</div>
<svg class="ab" style="left:1581.5px;top:534.3px" width="12" height="12" viewBox="0 0 12 12"><path d="M2.500 4.500L6 8l3.500-3.500" fill="none" stroke="#888" stroke-width="1.2"/></svg>
<div class="ab t b" style="left:1613px;top:534.500px;font-size:10px;color:#444">==</div>
<div class="ab inp" style="left:1636.7px;top:526.8px;width:249.6px;height:26.5px"></div>
<div class="ab" style="left:1636.7px;top:526.8px;width:25px;height:26.5px;border:1px solid #d0d0d0;border-radius:4px 0 0 4px;background:#f6f6f6"></div>
<div class="ab t b c" style="left:1636.7px;top:534.8px;width:25px;font-size:11px;color:#222">T</div>
<div class="ab t" style="left:1667.7px;top:535.8px;font-size:10.500px;color:#444">True</div>
<svg class="ab" style="left:1888px;top:526px" width="7" height="28" viewBox="0 0 7 28"><path d="M0 0.5Q5 3 5 9V19Q5 25 0 27.5" fill="none" stroke="#c4c4c4" stroke-width="1.3"/></svg>
<div class="ab" style="left:1344px;top:566px;width:1.500px;height:205px;background:#fbb8a4"></div>
<div class="ab" style="left:1340px;top:581px;width:10px;height:31px;background:#fff"></div>
<div class="ab t b" style="left:1340.700px;top:609px;font-size:7.600px;color:#f08a6c;transform:rotate(-90deg);transform-origin:0 0">TRUE</div>
<div class="ab" style="left:1355.500px;top:568px;width:551px;height:200px;border:1px solid #dedede;border-right:none;background:#fff"></div>
<div class="ab" style="left:1356px;top:568px;width:550px;height:24px;background:linear-gradient(#ececec,#d9d9d9)"></div>
<svg class="ab" style="left:1363px;top:576px" width="9.500" height="9.500" viewBox="0 0 10 10"><path d="M0.500 2h9L5 9z" fill="#222"/></svg>
<div class="ab t b" style="left:1380px;top:575.5px;font-size:11.200px;color:#222">Replace Tile At ($X,$Y)</div>
<svg class="ab" style="left:1878px;top:574px" width="12" height="12" viewBox="0 0 12 12"><path d="M2.500 4.500L6 8l3.500-3.500" fill="none" stroke="#333" stroke-width="1.8"/></svg>
<div class="ab t lab" style="left:1368px;top:604px">X</div>
<div class="ab t lab" style="left:1637px;top:604px">Y</div>
<div class="ab inp" style="left:1367.7px;top:622.5px;width:258.5px;height:26.5px"></div>
<div class="ab" style="left:1367.7px;top:622.5px;width:25px;height:26.5px;border:1px solid #d0d0d0;border-radius:4px 0 0 4px;background:#f6f6f6"></div>
<div class="ab t b c" style="left:1367.7px;top:630.5px;width:25px;font-size:10.300px;color:#222">$</div>
<div class="ab t" style="left:1398.7px;top:631.5px;font-size:10.500px;color:#444">$X</div>
<svg class="ab" style="left:1605.2px;top:630.0px" width="12" height="12" viewBox="0 0 12 12"><path d="M2.500 4.500L6 8l3.500-3.500" fill="none" stroke="#888" stroke-width="1.2"/></svg>
<div class="ab inp" style="left:1636.7px;top:622.5px;width:258.5px;height:26.5px"></div>
<div class="ab" style="left:1636.7px;top:622.5px;width:25px;height:26.5px;border:1px solid #d0d0d0;border-radius:4px 0 0 4px;background:#f6f6f6"></div>
<div class="ab t b c" style="left:1636.7px;top:630.5px;width:25px;font-size:10.300px;color:#222">$</div>
<div class="ab t" style="left:1667.7px;top:631.5px;font-size:10.500px;color:#444">$Y</div>
<svg class="ab" style="left:1874.2px;top:630.0px" width="12" height="12" viewBox="0 0 12 12"><path d="M2.500 4.500L6 8l3.500-3.500" fill="none" stroke="#888" stroke-width="1.2"/></svg>
<div class="ab t lab" style="left:1368px;top:661px">Tileset <span style="font-size:8.500px;color:#999">8px</span></div>
<div class="ab t lab" style="left:1637px;top:661px">Tile</div>
<div class="ab inp" style="left:1367.700px;top:680px;width:258.500px;height:27.500px"></div>
<svg class="ab" style="left:1373px;top:685px" width="18" height="18" viewBox="0 0 18 18"><circle cx="9" cy="9" r="7.500" fill="#2a4a3a"/><circle cx="6.500" cy="6.500" r="2.500" fill="#8ac09a"/><circle cx="11.500" cy="6.500" r="2.500" fill="#8ac09a"/><circle cx="6.500" cy="11.500" r="2.500" fill="#8ac09a"/><circle cx="11.500" cy="11.500" r="2.500" fill="#8ac09a"/></svg>
<div class="ab t" style="left:1398.700px;top:687.5px;font-size:10.500px;color:#444">HUD-tileset</div>
<svg class="ab" style="left:1605.2px;top:687.5px" width="12" height="12" viewBox="0 0 12 12"><path d="M2.500 4.500L6 8l3.500-3.500" fill="none" stroke="#888" stroke-width="1.2"/></svg>
<div class="ab inp" style="left:1636.7px;top:680px;width:258.5px;height:27.5px"></div>
<div class="ab" style="left:1636.7px;top:680px;width:25px;height:27.5px;border:1px solid #d0d0d0;border-radius:4px 0 0 4px;background:#f6f6f6"></div>
<div class="ab t b c" style="left:1636.7px;top:688px;width:25px;font-size:11px;color:#222">#</div>
<div class="ab t" style="left:1667.7px;top:689px;font-size:10.500px;color:#444">46</div>
<div class="ab" style="left:1356px;top:719px;width:550px;height:1px;background:#e2e2e2"></div>
<div class="ab" style="left:1367.700px;top:729px;width:480px;height:28.500px;border:1px solid #c8c8c8;border-radius:3px;background:#f8f8f8"></div>
<svg class="ab" style="left:1575px;top:737px" width="12" height="12" viewBox="0 0 12 12"><path d="M6 1v10M1 6h10" stroke="#222" stroke-width="2.600"/></svg>
<div class="ab t" style="left:1593px;top:737px;font-size:10.500px;color:#333">Add Event</div>
<div class="ab" style="left:1333px;top:779px;width:573px;height:24px;background:#fce6e2"></div>
<svg class="ab" style="left:1340px;top:787px" width="9.500" height="9.500" viewBox="0 0 10 10"><path d="M0.500 2h9L5 9z" fill="#222"/></svg>
<div class="ab t b" style="left:1356px;top:786.500px;font-size:11.200px;color:#222">Else</div>
<div class="ab" style="left:1344px;top:813px;width:1.500px;height:198px;background:#fbb8a4"></div>
<div class="ab" style="left:1340px;top:826px;width:10px;height:34px;background:#fff"></div>
<div class="ab t b" style="left:1340.700px;top:857px;font-size:7.600px;color:#f08a6c;transform:rotate(-90deg);transform-origin:0 0">FALSE</div>
<div class="ab" style="left:1355.500px;top:815px;width:551px;height:200px;border:1px solid #dedede;border-right:none;background:#fff"></div>
<div class="ab" style="left:1356px;top:815px;width:550px;height:24px;background:linear-gradient(#ececec,#d9d9d9)"></div>
<svg class="ab" style="left:1363px;top:823px" width="9.500" height="9.500" viewBox="0 0 10 10"><path d="M0.500 2h9L5 9z" fill="#222"/></svg>
<div class="ab t b" style="left:1380px;top:822.5px;font-size:11.200px;color:#222">Replace Tile At ($X,$Y)</div>
<svg class="ab" style="left:1878px;top:821px" width="12" height="12" viewBox="0 0 12 12"><path d="M2.500 4.500L6 8l3.500-3.500" fill="none" stroke="#333" stroke-width="1.8"/></svg>
<div class="ab t lab" style="left:1368px;top:851px">X</div>
<div class="ab t lab" style="left:1637px;top:851px">Y</div>
<div class="ab inp" style="left:1367.7px;top:869.5px;width:258.5px;height:26.5px"></div>
<div class="ab" style="left:1367.7px;top:869.5px;width:25px;height:26.5px;border:1px solid #d0d0d0;border-radius:4px 0 0 4px;background:#f6f6f6"></div>
<div class="ab t b c" style="left:1367.7px;top:877.5px;width:25px;font-size:10.300px;color:#222">$</div>
<div class="ab t" style="left:1398.7px;top:878.5px;font-size:10.500px;color:#444">$X</div>
<svg class="ab" style="left:1605.2px;top:877.0px" width="12" height="12" viewBox="0 0 12 12"><path d="M2.500 4.500L6 8l3.500-3.500" fill="none" stroke="#888" stroke-width="1.2"/></svg>
<div class="ab inp" style="left:1636.7px;top:869.5px;width:258.5px;height:26.5px"></div>
<div class="ab" style="left:1636.7px;top:869.5px;width:25px;height:26.5px;border:1px solid #d0d0d0;border-radius:4px 0 0 4px;background:#f6f6f6"></div>
<div class="ab t b c" style="left:1636.7px;top:877.5px;width:25px;font-size:10.300px;color:#222">$</div>
<div class="ab t" style="left:1667.7px;top:878.5px;font-size:10.500px;color:#444">$Y</div>
<svg class="ab" style="left:1874.2px;top:877.0px" width="12" height="12" viewBox="0 0 12 12"><path d="M2.500 4.500L6 8l3.500-3.500" fill="none" stroke="#888" stroke-width="1.2"/></svg>
<div class="ab t lab" style="left:1368px;top:908px">Tileset <span style="font-size:8.500px;color:#999">8px</span></div>
<div class="ab t lab" style="left:1637px;top:908px">Tile</div>
<div class="ab inp" style="left:1367.700px;top:927px;width:258.500px;height:27.500px"></div>
<svg class="ab" style="left:1373px;top:932px" width="18" height="18" viewBox="0 0 18 18"><path d="M9 16L2 9V5l3-3h2l2 2 2-2h2l3 3v4z" fill="#222"/><path d="M9 13.500L4 8.500V6l1.500-1.500h1L9 7l2.500-2.500h1L14 6v2.500z" fill="#5aa56a"/></svg>
<div class="ab t" style="left:1398.700px;top:934.5px;font-size:10.500px;color:#444">HUD-tileset</div>
<svg class="ab" style="left:1605.2px;top:934.5px" width="12" height="12" viewBox="0 0 12 12"><path d="M2.500 4.500L6 8l3.500-3.500" fill="none" stroke="#888" stroke-width="1.2"/></svg>
<div class="ab inp" style="left:1636.7px;top:927px;width:258.5px;height:27.5px"></div>
<div class="ab" style="left:1636.7px;top:927px;width:25px;height:27.5px;border:1px solid #d0d0d0;border-radius:4px 0 0 4px;background:#f6f6f6"></div>
<div class="ab t b c" style="left:1636.7px;top:935px;width:25px;font-size:11px;color:#222">#</div>
<div class="ab t" style="left:1667.7px;top:936px;font-size:10.500px;color:#444">45</div>
<div class="ab" style="left:1356px;top:966px;width:550px;height:1px;background:#e2e2e2"></div>
<div class="ab" style="left:1367.700px;top:976px;width:480px;height:28.500px;border:1px solid #c8c8c8;border-radius:3px;background:#f8f8f8"></div>
<svg class="ab" style="left:1575px;top:984px" width="12" height="12" viewBox="0 0 12 12"><path d="M6 1v10M1 6h10" stroke="#222" stroke-width="2.600"/></svg>
<div class="ab t" style="left:1593px;top:984px;font-size:10.500px;color:#333">Add Event</div>
<div class="ab" style="left:1311px;top:1010.500px;width:609px;height:30px;background:#fff;border-top:1px solid #dcdcdc"></div>
<svg class="ab" style="left:1321px;top:1021px" width="9.500" height="9.500" viewBox="0 0 10 10"><path d="M2 0.500v9l7-4.500z" fill="#222"/></svg>
<div class="ab t b" style="left:1336px;top:1020px;font-size:10.500px;color:#222">SCRIPT USES</div>
</div></body></html>
